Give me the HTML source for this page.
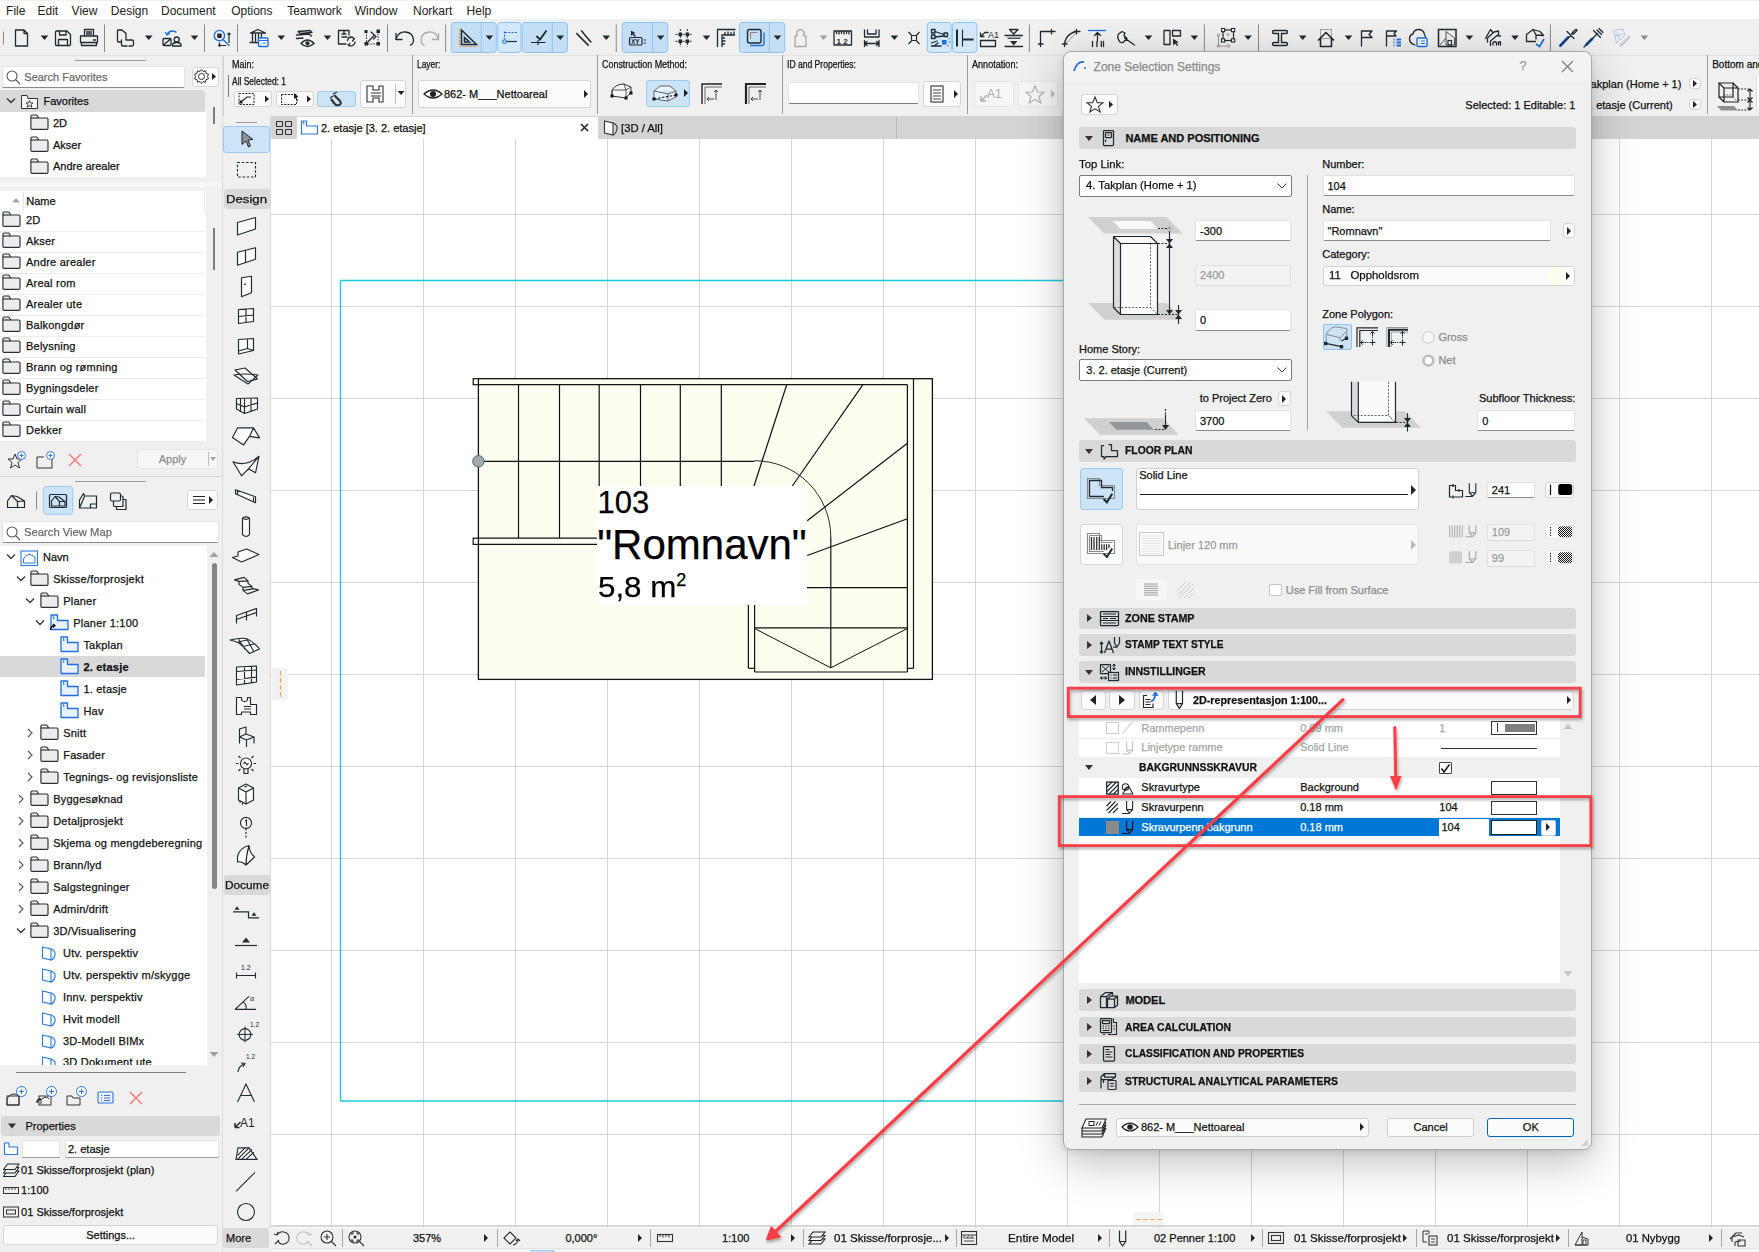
<!DOCTYPE html>
<html><head><meta charset="utf-8"><style>
html,body{margin:0;padding:0;width:1759px;height:1252px;overflow:hidden;background:#f0f0f0;}
body{position:relative;font-family:"Liberation Sans", sans-serif;}
body>div,body>svg{position:absolute;box-sizing:border-box;}
.t{white-space:pre;-webkit-text-stroke:0.25px currentColor;}
</style></head><body>
<div style="left:0px;top:1px;width:1759px;height:18px;background:#fff"></div>
<div class="t" style="left:6.1px;top:2.5px;font-size:12px;line-height:16px;color:#222;font-weight:normal;-webkit-text-stroke:0;">File</div>
<div class="t" style="left:37.5px;top:2.5px;font-size:12px;line-height:16px;color:#222;font-weight:normal;-webkit-text-stroke:0;">Edit</div>
<div class="t" style="left:71.6px;top:2.5px;font-size:12px;line-height:16px;color:#222;font-weight:normal;-webkit-text-stroke:0;">View</div>
<div class="t" style="left:110.8px;top:2.5px;font-size:12px;line-height:16px;color:#222;font-weight:normal;-webkit-text-stroke:0;">Design</div>
<div class="t" style="left:161px;top:2.5px;font-size:12px;line-height:16px;color:#222;font-weight:normal;-webkit-text-stroke:0;">Document</div>
<div class="t" style="left:231.2px;top:2.5px;font-size:12px;line-height:16px;color:#222;font-weight:normal;-webkit-text-stroke:0;">Options</div>
<div class="t" style="left:287.2px;top:2.5px;font-size:12px;line-height:16px;color:#222;font-weight:normal;-webkit-text-stroke:0;">Teamwork</div>
<div class="t" style="left:354.7px;top:2.5px;font-size:12px;line-height:16px;color:#222;font-weight:normal;-webkit-text-stroke:0;">Window</div>
<div class="t" style="left:413px;top:2.5px;font-size:12px;line-height:16px;color:#222;font-weight:normal;-webkit-text-stroke:0;">Norkart</div>
<div class="t" style="left:466.6px;top:2.5px;font-size:12px;line-height:16px;color:#222;font-weight:normal;-webkit-text-stroke:0;">Help</div>
<div style="left:0px;top:55px;width:1759px;height:1px;background:#e3e3e3"></div>
<div style="left:222px;top:56px;width:1537px;height:60px;background:#f0f0f0"></div>
<div style="left:0px;top:56px;width:222px;height:1196px;background:#f0f0f0"></div>
<div style="left:222px;top:56px;width:1px;height:1196px;background:#dcdcdc"></div>
<div style="left:223px;top:116px;width:48px;height:1136px;background:#f0f0f0"></div>
<div style="left:270px;top:116px;width:1px;height:1112px;background:#dadada"></div>
<div style="left:271px;top:116px;width:1488px;height:23px;background:#d4d4d4"></div>
<div style="left:271px;top:139px;width:1488px;height:1089px;background:#fff"></div>
<div style="left:271px;top:1228px;width:1488px;height:24px;background:#f0f0f0"></div>
<div style="left:271px;top:1225px;width:1488px;height:1px;background:#d8d8d8"></div>
<div style="left:271px;top:1248px;width:1488px;height:1px;background:#e2e2e2"></div>
<div style="left:271px;top:1249px;width:1488px;height:3px;background:#f5f5f5"></div>
<svg style="left:271px;top:139px;" width="1488" height="1089" viewBox="0 0 1488 1089"><line x1="60.5" y1="0" x2="60.5" y2="1089" stroke="#d6d6d6" stroke-width="1"/><line x1="152.5" y1="0" x2="152.5" y2="1089" stroke="#d6d6d6" stroke-width="1"/><line x1="244.5" y1="0" x2="244.5" y2="1089" stroke="#d6d6d6" stroke-width="1"/><line x1="336.5" y1="0" x2="336.5" y2="1089" stroke="#d6d6d6" stroke-width="1"/><line x1="428.5" y1="0" x2="428.5" y2="1089" stroke="#d6d6d6" stroke-width="1"/><line x1="520.5" y1="0" x2="520.5" y2="1089" stroke="#d6d6d6" stroke-width="1"/><line x1="612.5" y1="0" x2="612.5" y2="1089" stroke="#d6d6d6" stroke-width="1"/><line x1="704.5" y1="0" x2="704.5" y2="1089" stroke="#d6d6d6" stroke-width="1"/><line x1="796.5" y1="0" x2="796.5" y2="1089" stroke="#d6d6d6" stroke-width="1"/><line x1="888.5" y1="0" x2="888.5" y2="1089" stroke="#d6d6d6" stroke-width="1"/><line x1="980.5" y1="0" x2="980.5" y2="1089" stroke="#d6d6d6" stroke-width="1"/><line x1="1072.5" y1="0" x2="1072.5" y2="1089" stroke="#d6d6d6" stroke-width="1"/><line x1="1164.5" y1="0" x2="1164.5" y2="1089" stroke="#d6d6d6" stroke-width="1"/><line x1="1256.5" y1="0" x2="1256.5" y2="1089" stroke="#d6d6d6" stroke-width="1"/><line x1="1348.5" y1="0" x2="1348.5" y2="1089" stroke="#d6d6d6" stroke-width="1"/><line x1="1440.5" y1="0" x2="1440.5" y2="1089" stroke="#d6d6d6" stroke-width="1"/><line x1="0" y1="75.5" x2="1488" y2="75.5" stroke="#d6d6d6" stroke-width="1"/><line x1="0" y1="167.5" x2="1488" y2="167.5" stroke="#d6d6d6" stroke-width="1"/><line x1="0" y1="259.5" x2="1488" y2="259.5" stroke="#d6d6d6" stroke-width="1"/><line x1="0" y1="351.5" x2="1488" y2="351.5" stroke="#d6d6d6" stroke-width="1"/><line x1="0" y1="443.5" x2="1488" y2="443.5" stroke="#d6d6d6" stroke-width="1"/><line x1="0" y1="535.5" x2="1488" y2="535.5" stroke="#d6d6d6" stroke-width="1"/><line x1="0" y1="627.5" x2="1488" y2="627.5" stroke="#d6d6d6" stroke-width="1"/><line x1="0" y1="719.5" x2="1488" y2="719.5" stroke="#d6d6d6" stroke-width="1"/><line x1="0" y1="811.5" x2="1488" y2="811.5" stroke="#d6d6d6" stroke-width="1"/><line x1="0" y1="903.5" x2="1488" y2="903.5" stroke="#d6d6d6" stroke-width="1"/><line x1="0" y1="995.5" x2="1488" y2="995.5" stroke="#d6d6d6" stroke-width="1"/><line x1="0" y1="1087.5" x2="1488" y2="1087.5" stroke="#d6d6d6" stroke-width="1"/></svg>
<div style="left:75px;top:59.5px;width:71px;height:1.0px;background:#9a9a9a"></div>
<div style="left:2px;top:66px;width:183px;height:21.5px;background:#fff;border:1px solid #e4e4e4;border-bottom:1px solid #8a8a8a;border-radius:2px"></div>
<svg style="left:5px;top:69px;" width="16" height="16" viewBox="0 0 16 16"><circle cx="7" cy="7" r="5" fill="none" stroke="#555" stroke-width="1.1"/><path d="M10.5 10.5 L15 15" stroke="#555" stroke-width="1.1"/></svg>
<div class="t" style="left:24.3px;top:69.5px;font-size:11px;line-height:15px;color:#6d6d6d;font-weight:normal;">Search Favorites</div>
<div style="left:191.5px;top:66.5px;width:27.0px;height:20.0px;background:#fbfbfb;border:1px solid #d6d6d6;border-radius:3px"></div>
<svg style="left:192px;top:67px;" width="26" height="19" viewBox="0 0 26 19"><circle cx="9.5" cy="9.5" r="3" fill="none" stroke="#333" stroke-width="1"/><path d="M9.5 2.5 L11 4.5 L13.5 3.8 L14 6.3 L16.5 7.2 L15.5 9.5 L16.5 11.8 L14 12.7 L13.5 15.2 L11 14.5 L9.5 16.5 L8 14.5 L5.5 15.2 L5 12.7 L2.5 11.8 L3.5 9.5 L2.5 7.2 L5 6.3 L5.5 3.8 L8 4.5 Z" fill="none" stroke="#333" stroke-width="1"/><path d="M20 6 L24 9.5 L20 13 Z" fill="#222"/></svg>
<div style="left:0px;top:112px;width:206px;height:64.5px;background:#fff"></div>
<div style="left:0px;top:90px;width:204.6px;height:22px;background:#d9d9d9;border-radius:0 3px 3px 0"></div>
<svg style="left:5.5px;top:97px;" width="10" height="8" viewBox="0 0 10 8"><path d="M1 1.5 L5 5.5 L9 1.5" fill="none" stroke="#333" stroke-width="1.3"/></svg>
<svg style="left:19.5px;top:93px;" width="20" height="17" viewBox="0 0 20 17"><path d="M1.5 3.5 L1.5 15.5 L17.5 15.5 L17.5 5.5 L8 5.5 L7 2.5 L1.5 2.5 Z" fill="#f4f4f4" stroke="#333" stroke-width="1"/><path d="M9.5 7.5 L10.5 10 L13 10 L11 11.7 L11.8 14.2 L9.5 12.7 L7.2 14.2 L8 11.7 L6 10 L8.5 10 Z" fill="none" stroke="#333" stroke-width="0.9"/></svg>
<div class="t" style="left:43.5px;top:93.5px;font-size:11px;line-height:15px;color:#111;font-weight:normal;">Favorites</div>
<svg style="left:30px;top:114.4px;" width="20" height="17" viewBox="0 0 20 17"><path d="M0.9 2.2 Q0.9 1 2.1 1 L6.8 1 L8.8 4 L16.8 4 Q18 4 18 5.2 L18 14.2 Q18 15.4 16.8 15.4 L2.1 15.4 Q0.9 15.4 0.9 14.2 Z" fill="#ececec" stroke="#2a3035" stroke-width="1.15" stroke-linejoin="round"/><path d="M0.9 4 L8.8 4" stroke="#2a3035" stroke-width="1.15"/></svg>
<div class="t" style="left:53px;top:115.9px;font-size:11px;line-height:15px;color:#111;font-weight:normal;">2D</div>
<svg style="left:30px;top:136px;" width="20" height="17" viewBox="0 0 20 17"><path d="M0.9 2.2 Q0.9 1 2.1 1 L6.8 1 L8.8 4 L16.8 4 Q18 4 18 5.2 L18 14.2 Q18 15.4 16.8 15.4 L2.1 15.4 Q0.9 15.4 0.9 14.2 Z" fill="#ececec" stroke="#2a3035" stroke-width="1.15" stroke-linejoin="round"/><path d="M0.9 4 L8.8 4" stroke="#2a3035" stroke-width="1.15"/></svg>
<div class="t" style="left:53px;top:137.5px;font-size:11px;line-height:15px;color:#111;font-weight:normal;">Akser</div>
<svg style="left:30px;top:157.8px;" width="20" height="17" viewBox="0 0 20 17"><path d="M0.9 2.2 Q0.9 1 2.1 1 L6.8 1 L8.8 4 L16.8 4 Q18 4 18 5.2 L18 14.2 Q18 15.4 16.8 15.4 L2.1 15.4 Q0.9 15.4 0.9 14.2 Z" fill="#ececec" stroke="#2a3035" stroke-width="1.15" stroke-linejoin="round"/><path d="M0.9 4 L8.8 4" stroke="#2a3035" stroke-width="1.15"/></svg>
<div class="t" style="left:53px;top:159.3px;font-size:11px;line-height:15px;color:#111;font-weight:normal;">Andre arealer</div>
<div style="left:213px;top:107px;width:2px;height:17px;background:#7c7c7c"></div>
<div style="left:0px;top:182px;width:222px;height:5px;background:#f6f6f6"></div>
<div style="left:0px;top:191px;width:206px;height:251.39999999999998px;background:#fff"></div>
<div style="left:23px;top:192px;width:1px;height:18px;background:#e6e6e6"></div>
<div style="left:204px;top:192px;width:1px;height:18px;background:#e6e6e6"></div>
<svg style="left:11px;top:196px;" width="10" height="8" viewBox="0 0 10 8"><path d="M1 6.5 L5 2 L9 6.5 Z" fill="#a8a8a8"/></svg>
<div class="t" style="left:26.2px;top:193.9px;font-size:11px;line-height:15px;color:#111;font-weight:normal;">Name</div>
<svg style="left:1.5px;top:211px;" width="20" height="17" viewBox="0 0 20 17"><path d="M0.9 2.2 Q0.9 1 2.1 1 L6.8 1 L8.8 4 L16.8 4 Q18 4 18 5.2 L18 14.2 Q18 15.4 16.8 15.4 L2.1 15.4 Q0.9 15.4 0.9 14.2 Z" fill="#ececec" stroke="#2a3035" stroke-width="1.15" stroke-linejoin="round"/><path d="M0.9 4 L8.8 4" stroke="#2a3035" stroke-width="1.15"/></svg>
<div class="t" style="left:26px;top:212.5px;font-size:11px;line-height:15px;color:#111;font-weight:normal;letter-spacing:0.22px;">2D</div>
<div style="left:0px;top:230.5px;width:205px;height:1.0px;background:#ececec"></div>
<svg style="left:1.5px;top:232px;" width="20" height="17" viewBox="0 0 20 17"><path d="M0.9 2.2 Q0.9 1 2.1 1 L6.8 1 L8.8 4 L16.8 4 Q18 4 18 5.2 L18 14.2 Q18 15.4 16.8 15.4 L2.1 15.4 Q0.9 15.4 0.9 14.2 Z" fill="#ececec" stroke="#2a3035" stroke-width="1.15" stroke-linejoin="round"/><path d="M0.9 4 L8.8 4" stroke="#2a3035" stroke-width="1.15"/></svg>
<div class="t" style="left:26px;top:233.5px;font-size:11px;line-height:15px;color:#111;font-weight:normal;letter-spacing:0.22px;">Akser</div>
<div style="left:0px;top:251.5px;width:205px;height:1.0px;background:#ececec"></div>
<svg style="left:1.5px;top:253px;" width="20" height="17" viewBox="0 0 20 17"><path d="M0.9 2.2 Q0.9 1 2.1 1 L6.8 1 L8.8 4 L16.8 4 Q18 4 18 5.2 L18 14.2 Q18 15.4 16.8 15.4 L2.1 15.4 Q0.9 15.4 0.9 14.2 Z" fill="#ececec" stroke="#2a3035" stroke-width="1.15" stroke-linejoin="round"/><path d="M0.9 4 L8.8 4" stroke="#2a3035" stroke-width="1.15"/></svg>
<div class="t" style="left:26px;top:254.5px;font-size:11px;line-height:15px;color:#111;font-weight:normal;letter-spacing:0.22px;">Andre arealer</div>
<div style="left:0px;top:272.5px;width:205px;height:1.0px;background:#ececec"></div>
<svg style="left:1.5px;top:274px;" width="20" height="17" viewBox="0 0 20 17"><path d="M0.9 2.2 Q0.9 1 2.1 1 L6.8 1 L8.8 4 L16.8 4 Q18 4 18 5.2 L18 14.2 Q18 15.4 16.8 15.4 L2.1 15.4 Q0.9 15.4 0.9 14.2 Z" fill="#ececec" stroke="#2a3035" stroke-width="1.15" stroke-linejoin="round"/><path d="M0.9 4 L8.8 4" stroke="#2a3035" stroke-width="1.15"/></svg>
<div class="t" style="left:26px;top:275.5px;font-size:11px;line-height:15px;color:#111;font-weight:normal;letter-spacing:0.22px;">Areal rom</div>
<div style="left:0px;top:293.5px;width:205px;height:1.0px;background:#ececec"></div>
<svg style="left:1.5px;top:295px;" width="20" height="17" viewBox="0 0 20 17"><path d="M0.9 2.2 Q0.9 1 2.1 1 L6.8 1 L8.8 4 L16.8 4 Q18 4 18 5.2 L18 14.2 Q18 15.4 16.8 15.4 L2.1 15.4 Q0.9 15.4 0.9 14.2 Z" fill="#ececec" stroke="#2a3035" stroke-width="1.15" stroke-linejoin="round"/><path d="M0.9 4 L8.8 4" stroke="#2a3035" stroke-width="1.15"/></svg>
<div class="t" style="left:26px;top:296.5px;font-size:11px;line-height:15px;color:#111;font-weight:normal;letter-spacing:0.22px;">Arealer ute</div>
<div style="left:0px;top:314.5px;width:205px;height:1.0px;background:#ececec"></div>
<svg style="left:1.5px;top:316px;" width="20" height="17" viewBox="0 0 20 17"><path d="M0.9 2.2 Q0.9 1 2.1 1 L6.8 1 L8.8 4 L16.8 4 Q18 4 18 5.2 L18 14.2 Q18 15.4 16.8 15.4 L2.1 15.4 Q0.9 15.4 0.9 14.2 Z" fill="#ececec" stroke="#2a3035" stroke-width="1.15" stroke-linejoin="round"/><path d="M0.9 4 L8.8 4" stroke="#2a3035" stroke-width="1.15"/></svg>
<div class="t" style="left:26px;top:317.5px;font-size:11px;line-height:15px;color:#111;font-weight:normal;letter-spacing:0.22px;">Balkongdør</div>
<div style="left:0px;top:335.5px;width:205px;height:1.0px;background:#ececec"></div>
<svg style="left:1.5px;top:337px;" width="20" height="17" viewBox="0 0 20 17"><path d="M0.9 2.2 Q0.9 1 2.1 1 L6.8 1 L8.8 4 L16.8 4 Q18 4 18 5.2 L18 14.2 Q18 15.4 16.8 15.4 L2.1 15.4 Q0.9 15.4 0.9 14.2 Z" fill="#ececec" stroke="#2a3035" stroke-width="1.15" stroke-linejoin="round"/><path d="M0.9 4 L8.8 4" stroke="#2a3035" stroke-width="1.15"/></svg>
<div class="t" style="left:26px;top:338.5px;font-size:11px;line-height:15px;color:#111;font-weight:normal;letter-spacing:0.22px;">Belysning</div>
<div style="left:0px;top:356.5px;width:205px;height:1.0px;background:#ececec"></div>
<svg style="left:1.5px;top:358px;" width="20" height="17" viewBox="0 0 20 17"><path d="M0.9 2.2 Q0.9 1 2.1 1 L6.8 1 L8.8 4 L16.8 4 Q18 4 18 5.2 L18 14.2 Q18 15.4 16.8 15.4 L2.1 15.4 Q0.9 15.4 0.9 14.2 Z" fill="#ececec" stroke="#2a3035" stroke-width="1.15" stroke-linejoin="round"/><path d="M0.9 4 L8.8 4" stroke="#2a3035" stroke-width="1.15"/></svg>
<div class="t" style="left:26px;top:359.5px;font-size:11px;line-height:15px;color:#111;font-weight:normal;letter-spacing:0.22px;">Brann og rømning</div>
<div style="left:0px;top:377.5px;width:205px;height:1.0px;background:#ececec"></div>
<svg style="left:1.5px;top:379px;" width="20" height="17" viewBox="0 0 20 17"><path d="M0.9 2.2 Q0.9 1 2.1 1 L6.8 1 L8.8 4 L16.8 4 Q18 4 18 5.2 L18 14.2 Q18 15.4 16.8 15.4 L2.1 15.4 Q0.9 15.4 0.9 14.2 Z" fill="#ececec" stroke="#2a3035" stroke-width="1.15" stroke-linejoin="round"/><path d="M0.9 4 L8.8 4" stroke="#2a3035" stroke-width="1.15"/></svg>
<div class="t" style="left:26px;top:380.5px;font-size:11px;line-height:15px;color:#111;font-weight:normal;letter-spacing:0.22px;">Bygningsdeler</div>
<div style="left:0px;top:398.5px;width:205px;height:1.0px;background:#ececec"></div>
<svg style="left:1.5px;top:400px;" width="20" height="17" viewBox="0 0 20 17"><path d="M0.9 2.2 Q0.9 1 2.1 1 L6.8 1 L8.8 4 L16.8 4 Q18 4 18 5.2 L18 14.2 Q18 15.4 16.8 15.4 L2.1 15.4 Q0.9 15.4 0.9 14.2 Z" fill="#ececec" stroke="#2a3035" stroke-width="1.15" stroke-linejoin="round"/><path d="M0.9 4 L8.8 4" stroke="#2a3035" stroke-width="1.15"/></svg>
<div class="t" style="left:26px;top:401.5px;font-size:11px;line-height:15px;color:#111;font-weight:normal;letter-spacing:0.22px;">Curtain wall</div>
<div style="left:0px;top:419.5px;width:205px;height:1.0px;background:#ececec"></div>
<svg style="left:1.5px;top:421px;" width="20" height="17" viewBox="0 0 20 17"><path d="M0.9 2.2 Q0.9 1 2.1 1 L6.8 1 L8.8 4 L16.8 4 Q18 4 18 5.2 L18 14.2 Q18 15.4 16.8 15.4 L2.1 15.4 Q0.9 15.4 0.9 14.2 Z" fill="#ececec" stroke="#2a3035" stroke-width="1.15" stroke-linejoin="round"/><path d="M0.9 4 L8.8 4" stroke="#2a3035" stroke-width="1.15"/></svg>
<div class="t" style="left:26px;top:422.5px;font-size:11px;line-height:15px;color:#111;font-weight:normal;letter-spacing:0.22px;">Dekker</div>
<div style="left:0px;top:440.5px;width:205px;height:1.0px;background:#ececec"></div>
<div style="left:213px;top:228px;width:2px;height:42px;background:#7c7c7c"></div>
<svg style="left:6px;top:450px;" width="22" height="20" viewBox="0 0 22 20"><path d="M9 4 L11 9 L16 9 L12 12.5 L13.5 18 L9 15 L4.5 18 L6 12.5 L2 9 L7 9 Z" fill="none" stroke="#333" stroke-width="1"/><circle cx="15.5" cy="5.5" r="4" fill="#fff" stroke="#2b79e3" stroke-width="1"/><path d="M15.5 3.5 L15.5 7.5 M13.5 5.5 L17.5 5.5" stroke="#2b79e3" stroke-width="1"/></svg>
<svg style="left:35px;top:450px;" width="22" height="20" viewBox="0 0 22 20"><path d="M2 7 L2 18 L17 18 L17 9 M2 7 L9 7" fill="none" stroke="#333" stroke-width="1"/><circle cx="15.5" cy="5.5" r="4" fill="#fff" stroke="#2b79e3" stroke-width="1"/><path d="M15.5 3.5 L15.5 7.5 M13.5 5.5 L17.5 5.5" stroke="#2b79e3" stroke-width="1"/></svg>
<svg style="left:66px;top:451px;" width="18" height="18" viewBox="0 0 18 18"><path d="M3 3 L15 15 M15 3 L3 15" stroke="#f08080" stroke-width="1.6"/></svg>
<div style="left:136.5px;top:449.4px;width:81.9px;height:19.400000000000034px;background:#f6f6f6;border:1px solid #e4e4e4;border-radius:3px"></div>
<div class="t" style="left:-27.5px;width:400px;text-align:center;top:452.0px;font-size:11px;line-height:15px;color:#8d8d8d;font-weight:normal;">Apply</div>
<div style="left:207.5px;top:452px;width:1.0px;height:14px;background:#bdbdbd"></div>
<svg style="left:209px;top:456px;" width="8" height="6" viewBox="0 0 8 6"><path d="M1 1 L7 1 L4 5 Z" fill="#a0a0a0"/></svg>
<div style="left:0px;top:475.5px;width:222px;height:1.0px;background:#d6d6d6"></div>
<div style="left:75px;top:480.5px;width:71px;height:1.0px;background:#9a9a9a"></div>
<svg style="left:0px;top:480px" width="140" height="40" viewBox="0 480 140 40"><path d="M7.5 507.5 L7.5 501 L11.5 495.5 L17 496.5 L24.5 501 L24.5 507.5 Z M11.5 495.5 L17.5 501.5 L24.5 501 M17.5 501.5 L17.5 507.5" fill="none" stroke="#1f2a30" stroke-width="1.2" stroke-linejoin="round"/><path d="M36.5 491.5 L36.5 509.5" stroke="#8a8a8a" stroke-width="1"/><rect x="43.4" y="486.4" width="29.4" height="27.9" rx="3" fill="#cce4f7" stroke="#9ccaf0" stroke-width="1"/><rect x="49.5" y="494.5" width="17" height="13" rx="1" fill="none" stroke="#1f2a30" stroke-width="1.2" stroke-linejoin="round" stroke-width="1.5"/><path d="M51.5 506 L51.5 501 L55 496.5 L59 497 L65 501.5 L65 506 Z M55 496.5 L59.5 501.5 L65 501.5 M59.5 501.5 L59.5 506" fill="none" stroke="#1f2a30" stroke-width="1.2" stroke-linejoin="round"/><path d="M79.5 508 L79.5 500 L83.5 493.5 L84.5 496 L96.5 496 L96.5 508 Z M79.5 508 L84.5 496.5 M90.5 508 L90.5 504 L96.5 504" fill="none" stroke="#1f2a30" stroke-width="1.2" stroke-linejoin="round"/><rect x="110.5" y="493" width="10" height="8" rx="1.5" fill="none" stroke="#1f2a30" stroke-width="1.2" stroke-linejoin="round"/><path d="M113.5 501 L113.5 505.5 Q113.5 506.5 114.5 506.5 L123 506.5 L123 497 Q123 496 122 496 L120.5 496 M116.5 506.5 L116.5 509.5 L126 509.5 L126 499.5 L123 499.5" fill="none" stroke="#1f2a30" stroke-width="1.2" stroke-linejoin="round"/></svg>
<div style="left:186.6px;top:490px;width:31.80000000000001px;height:20px;background:#fbfbfb;border:1px solid #d6d6d6;border-radius:3px"></div>
<svg style="left:190px;top:494px;" width="26" height="12" viewBox="0 0 26 12"><path d="M3 2.5 L15 2.5 M3 6 L15 6 M3 9.5 L15 9.5" stroke="#222" stroke-width="1.1"/><path d="M19 2 L23 6 L19 10 Z" fill="#222"/></svg>
<div style="left:2.4px;top:521.3px;width:216.6px;height:21.90000000000009px;background:#fff;border:1px solid #e4e4e4;border-bottom:1px solid #8a8a8a;border-radius:2px"></div>
<svg style="left:5px;top:525px;" width="16" height="16" viewBox="0 0 16 16"><circle cx="7" cy="7" r="5" fill="none" stroke="#555" stroke-width="1.1"/><path d="M10.5 10.5 L15 15" stroke="#555" stroke-width="1.1"/></svg>
<div class="t" style="left:23.5px;top:525.0px;font-size:11px;line-height:15px;color:#6d6d6d;font-weight:normal;transform:scaleX(1.023);transform-origin:left;">Search View Map</div>
<div style="left:0px;top:546px;width:207px;height:519px;background:#fff"></div>
<svg style="left:6px;top:553.2px;" width="10" height="8" viewBox="0 0 10 8"><path d="M1 1.5 L5 5.5 L9 1.5" fill="none" stroke="#333" stroke-width="1.3"/></svg>
<svg style="left:19.5px;top:550px;" width="19" height="17" viewBox="0 0 19 17"><rect x="1" y="1" width="16.5" height="14.5" fill="#fff" stroke="#2b79e3" stroke-width="1.1"/><path d="M3.5 13 L3.5 9 Q5.5 4.5 10 4.5 L15 7 L15 13 Z" fill="none" stroke="#2b79e3" stroke-width="1"/></svg>
<div class="t" style="left:43px;top:549.7px;font-size:11px;line-height:15px;color:#111;font-weight:normal;">Navn</div>
<div style="left:0px;top:656.4px;width:204.7px;height:21.0px;background:#d9d9d9"></div>
<svg style="left:15.7px;top:575.4px;" width="10" height="8" viewBox="0 0 10 8"><path d="M1 1.5 L5 5.5 L9 1.5" fill="none" stroke="#333" stroke-width="1.3"/></svg>
<svg style="left:30px;top:570.4px;" width="20" height="17" viewBox="0 0 20 17"><path d="M0.9 2.2 Q0.9 1 2.1 1 L6.8 1 L8.8 4 L16.8 4 Q18 4 18 5.2 L18 14.2 Q18 15.4 16.8 15.4 L2.1 15.4 Q0.9 15.4 0.9 14.2 Z" fill="#ececec" stroke="#2a3035" stroke-width="1.15" stroke-linejoin="round"/><path d="M0.9 4 L8.8 4" stroke="#2a3035" stroke-width="1.15"/></svg>
<div class="t" style="left:53.2px;top:571.9px;font-size:11px;line-height:15px;color:#111;font-weight:normal;letter-spacing:0.22px;">Skisse/forprosjekt</div>
<svg style="left:25.2px;top:597.2px;" width="10" height="8" viewBox="0 0 10 8"><path d="M1 1.5 L5 5.5 L9 1.5" fill="none" stroke="#333" stroke-width="1.3"/></svg>
<svg style="left:40px;top:592.2px;" width="20" height="17" viewBox="0 0 20 17"><path d="M0.9 2.2 Q0.9 1 2.1 1 L6.8 1 L8.8 4 L16.8 4 Q18 4 18 5.2 L18 14.2 Q18 15.4 16.8 15.4 L2.1 15.4 Q0.9 15.4 0.9 14.2 Z" fill="#ececec" stroke="#2a3035" stroke-width="1.15" stroke-linejoin="round"/><path d="M0.9 4 L8.8 4" stroke="#2a3035" stroke-width="1.15"/></svg>
<div class="t" style="left:63.2px;top:593.7px;font-size:11px;line-height:15px;color:#111;font-weight:normal;letter-spacing:0.22px;">Planer</div>
<svg style="left:35.2px;top:619px;" width="10" height="8" viewBox="0 0 10 8"><path d="M1 1.5 L5 5.5 L9 1.5" fill="none" stroke="#333" stroke-width="1.3"/></svg>
<svg style="left:50.3px;top:614px;" width="20" height="17" viewBox="0 0 20 17"><path d="M1 1 L7.5 1 L7.5 6.5 L18 6.5 L18 15.5 L1 15.5 Z" fill="#e8f1fc" stroke="#1f6fe0" stroke-width="1.3" stroke-linejoin="round"/><path d="M3.5 2 L3.5 5 L5 3.5" fill="none" stroke="#2b79e3" stroke-width="0.8"/></svg>
<svg style="left:49.3px;top:623px;" width="8" height="8" viewBox="0 0 8 8"><path d="M1.5 7 Q1.5 2.5 6 2.5 M4 1 L6 2.5 L4 4.5" fill="none" stroke="#111" stroke-width="1.3"/></svg>
<div class="t" style="left:73.3px;top:615.5px;font-size:11px;line-height:15px;color:#111;font-weight:normal;letter-spacing:0.22px;">Planer 1:100</div>
<svg style="left:60.4px;top:636px;" width="20" height="17" viewBox="0 0 20 17"><path d="M1 1 L7.5 1 L7.5 6.5 L18 6.5 L18 15.5 L1 15.5 Z" fill="#e8f1fc" stroke="#1f6fe0" stroke-width="1.3" stroke-linejoin="round"/><path d="M3.5 2 L3.5 5 L5 3.5" fill="none" stroke="#2b79e3" stroke-width="0.8"/></svg>
<div class="t" style="left:83.4px;top:637.5px;font-size:11px;line-height:15px;color:#111;font-weight:normal;letter-spacing:0.22px;">Takplan</div>
<svg style="left:60.4px;top:658px;" width="20" height="17" viewBox="0 0 20 17"><path d="M1 1 L7.5 1 L7.5 6.5 L18 6.5 L18 15.5 L1 15.5 Z" fill="#e8f1fc" stroke="#1f6fe0" stroke-width="1.3" stroke-linejoin="round"/><path d="M3.5 2 L3.5 5 L5 3.5" fill="none" stroke="#2b79e3" stroke-width="0.8"/></svg>
<div class="t" style="left:83.4px;top:659.5px;font-size:11px;line-height:15px;color:#111;font-weight:bold;letter-spacing:0.22px;">2. etasje</div>
<svg style="left:60.4px;top:680px;" width="20" height="17" viewBox="0 0 20 17"><path d="M1 1 L7.5 1 L7.5 6.5 L18 6.5 L18 15.5 L1 15.5 Z" fill="#e8f1fc" stroke="#1f6fe0" stroke-width="1.3" stroke-linejoin="round"/><path d="M3.5 2 L3.5 5 L5 3.5" fill="none" stroke="#2b79e3" stroke-width="0.8"/></svg>
<div class="t" style="left:83.4px;top:681.5px;font-size:11px;line-height:15px;color:#111;font-weight:normal;letter-spacing:0.22px;">1. etasje</div>
<svg style="left:60.4px;top:702px;" width="20" height="17" viewBox="0 0 20 17"><path d="M1 1 L7.5 1 L7.5 6.5 L18 6.5 L18 15.5 L1 15.5 Z" fill="#e8f1fc" stroke="#1f6fe0" stroke-width="1.3" stroke-linejoin="round"/><path d="M3.5 2 L3.5 5 L5 3.5" fill="none" stroke="#2b79e3" stroke-width="0.8"/></svg>
<div class="t" style="left:83.4px;top:703.5px;font-size:11px;line-height:15px;color:#111;font-weight:normal;letter-spacing:0.22px;">Hav</div>
<svg style="left:26.2px;top:728px;" width="8" height="10" viewBox="0 0 8 10"><path d="M2 1 L6 5 L2 9" fill="none" stroke="#555" stroke-width="1.1"/></svg>
<svg style="left:40px;top:724px;" width="20" height="17" viewBox="0 0 20 17"><path d="M0.9 2.2 Q0.9 1 2.1 1 L6.8 1 L8.8 4 L16.8 4 Q18 4 18 5.2 L18 14.2 Q18 15.4 16.8 15.4 L2.1 15.4 Q0.9 15.4 0.9 14.2 Z" fill="#ececec" stroke="#2a3035" stroke-width="1.15" stroke-linejoin="round"/><path d="M0.9 4 L8.8 4" stroke="#2a3035" stroke-width="1.15"/></svg>
<div class="t" style="left:63.2px;top:725.5px;font-size:11px;line-height:15px;color:#111;font-weight:normal;letter-spacing:0.22px;">Snitt</div>
<svg style="left:26.2px;top:750px;" width="8" height="10" viewBox="0 0 8 10"><path d="M2 1 L6 5 L2 9" fill="none" stroke="#555" stroke-width="1.1"/></svg>
<svg style="left:40px;top:746px;" width="20" height="17" viewBox="0 0 20 17"><path d="M0.9 2.2 Q0.9 1 2.1 1 L6.8 1 L8.8 4 L16.8 4 Q18 4 18 5.2 L18 14.2 Q18 15.4 16.8 15.4 L2.1 15.4 Q0.9 15.4 0.9 14.2 Z" fill="#ececec" stroke="#2a3035" stroke-width="1.15" stroke-linejoin="round"/><path d="M0.9 4 L8.8 4" stroke="#2a3035" stroke-width="1.15"/></svg>
<div class="t" style="left:63.2px;top:747.5px;font-size:11px;line-height:15px;color:#111;font-weight:normal;letter-spacing:0.22px;">Fasader</div>
<svg style="left:26.2px;top:772px;" width="8" height="10" viewBox="0 0 8 10"><path d="M2 1 L6 5 L2 9" fill="none" stroke="#555" stroke-width="1.1"/></svg>
<svg style="left:40px;top:768px;" width="20" height="17" viewBox="0 0 20 17"><path d="M0.9 2.2 Q0.9 1 2.1 1 L6.8 1 L8.8 4 L16.8 4 Q18 4 18 5.2 L18 14.2 Q18 15.4 16.8 15.4 L2.1 15.4 Q0.9 15.4 0.9 14.2 Z" fill="#ececec" stroke="#2a3035" stroke-width="1.15" stroke-linejoin="round"/><path d="M0.9 4 L8.8 4" stroke="#2a3035" stroke-width="1.15"/></svg>
<div class="t" style="left:63.2px;top:769.5px;font-size:11px;line-height:15px;color:#111;font-weight:normal;letter-spacing:0.22px;">Tegnings- og revisjonsliste</div>
<svg style="left:16.7px;top:794px;" width="8" height="10" viewBox="0 0 8 10"><path d="M2 1 L6 5 L2 9" fill="none" stroke="#555" stroke-width="1.1"/></svg>
<svg style="left:30px;top:790px;" width="20" height="17" viewBox="0 0 20 17"><path d="M0.9 2.2 Q0.9 1 2.1 1 L6.8 1 L8.8 4 L16.8 4 Q18 4 18 5.2 L18 14.2 Q18 15.4 16.8 15.4 L2.1 15.4 Q0.9 15.4 0.9 14.2 Z" fill="#ececec" stroke="#2a3035" stroke-width="1.15" stroke-linejoin="round"/><path d="M0.9 4 L8.8 4" stroke="#2a3035" stroke-width="1.15"/></svg>
<div class="t" style="left:53.2px;top:791.5px;font-size:11px;line-height:15px;color:#111;font-weight:normal;letter-spacing:0.22px;">Byggesøknad</div>
<svg style="left:16.7px;top:816px;" width="8" height="10" viewBox="0 0 8 10"><path d="M2 1 L6 5 L2 9" fill="none" stroke="#555" stroke-width="1.1"/></svg>
<svg style="left:30px;top:812px;" width="20" height="17" viewBox="0 0 20 17"><path d="M0.9 2.2 Q0.9 1 2.1 1 L6.8 1 L8.8 4 L16.8 4 Q18 4 18 5.2 L18 14.2 Q18 15.4 16.8 15.4 L2.1 15.4 Q0.9 15.4 0.9 14.2 Z" fill="#ececec" stroke="#2a3035" stroke-width="1.15" stroke-linejoin="round"/><path d="M0.9 4 L8.8 4" stroke="#2a3035" stroke-width="1.15"/></svg>
<div class="t" style="left:53.2px;top:813.5px;font-size:11px;line-height:15px;color:#111;font-weight:normal;letter-spacing:0.22px;">Detaljprosjekt</div>
<svg style="left:16.7px;top:838px;" width="8" height="10" viewBox="0 0 8 10"><path d="M2 1 L6 5 L2 9" fill="none" stroke="#555" stroke-width="1.1"/></svg>
<svg style="left:30px;top:834px;" width="20" height="17" viewBox="0 0 20 17"><path d="M0.9 2.2 Q0.9 1 2.1 1 L6.8 1 L8.8 4 L16.8 4 Q18 4 18 5.2 L18 14.2 Q18 15.4 16.8 15.4 L2.1 15.4 Q0.9 15.4 0.9 14.2 Z" fill="#ececec" stroke="#2a3035" stroke-width="1.15" stroke-linejoin="round"/><path d="M0.9 4 L8.8 4" stroke="#2a3035" stroke-width="1.15"/></svg>
<div class="t" style="left:53.2px;top:835.5px;font-size:11px;line-height:15px;color:#111;font-weight:normal;letter-spacing:0.22px;">Skjema og mengdeberegning</div>
<svg style="left:16.7px;top:860px;" width="8" height="10" viewBox="0 0 8 10"><path d="M2 1 L6 5 L2 9" fill="none" stroke="#555" stroke-width="1.1"/></svg>
<svg style="left:30px;top:856px;" width="20" height="17" viewBox="0 0 20 17"><path d="M0.9 2.2 Q0.9 1 2.1 1 L6.8 1 L8.8 4 L16.8 4 Q18 4 18 5.2 L18 14.2 Q18 15.4 16.8 15.4 L2.1 15.4 Q0.9 15.4 0.9 14.2 Z" fill="#ececec" stroke="#2a3035" stroke-width="1.15" stroke-linejoin="round"/><path d="M0.9 4 L8.8 4" stroke="#2a3035" stroke-width="1.15"/></svg>
<div class="t" style="left:53.2px;top:857.5px;font-size:11px;line-height:15px;color:#111;font-weight:normal;letter-spacing:0.22px;">Brann/lyd</div>
<svg style="left:16.7px;top:882px;" width="8" height="10" viewBox="0 0 8 10"><path d="M2 1 L6 5 L2 9" fill="none" stroke="#555" stroke-width="1.1"/></svg>
<svg style="left:30px;top:878px;" width="20" height="17" viewBox="0 0 20 17"><path d="M0.9 2.2 Q0.9 1 2.1 1 L6.8 1 L8.8 4 L16.8 4 Q18 4 18 5.2 L18 14.2 Q18 15.4 16.8 15.4 L2.1 15.4 Q0.9 15.4 0.9 14.2 Z" fill="#ececec" stroke="#2a3035" stroke-width="1.15" stroke-linejoin="round"/><path d="M0.9 4 L8.8 4" stroke="#2a3035" stroke-width="1.15"/></svg>
<div class="t" style="left:53.2px;top:879.5px;font-size:11px;line-height:15px;color:#111;font-weight:normal;letter-spacing:0.22px;">Salgstegninger</div>
<svg style="left:16.7px;top:904.4px;" width="8" height="10" viewBox="0 0 8 10"><path d="M2 1 L6 5 L2 9" fill="none" stroke="#555" stroke-width="1.1"/></svg>
<svg style="left:30px;top:900.4px;" width="20" height="17" viewBox="0 0 20 17"><path d="M0.9 2.2 Q0.9 1 2.1 1 L6.8 1 L8.8 4 L16.8 4 Q18 4 18 5.2 L18 14.2 Q18 15.4 16.8 15.4 L2.1 15.4 Q0.9 15.4 0.9 14.2 Z" fill="#ececec" stroke="#2a3035" stroke-width="1.15" stroke-linejoin="round"/><path d="M0.9 4 L8.8 4" stroke="#2a3035" stroke-width="1.15"/></svg>
<div class="t" style="left:53.2px;top:901.9px;font-size:11px;line-height:15px;color:#111;font-weight:normal;letter-spacing:0.22px;">Admin/drift</div>
<svg style="left:15.7px;top:927px;" width="10" height="8" viewBox="0 0 10 8"><path d="M1 1.5 L5 5.5 L9 1.5" fill="none" stroke="#333" stroke-width="1.3"/></svg>
<svg style="left:30px;top:922px;" width="20" height="17" viewBox="0 0 20 17"><path d="M0.9 2.2 Q0.9 1 2.1 1 L6.8 1 L8.8 4 L16.8 4 Q18 4 18 5.2 L18 14.2 Q18 15.4 16.8 15.4 L2.1 15.4 Q0.9 15.4 0.9 14.2 Z" fill="#ececec" stroke="#2a3035" stroke-width="1.15" stroke-linejoin="round"/><path d="M0.9 4 L8.8 4" stroke="#2a3035" stroke-width="1.15"/></svg>
<div class="t" style="left:53.2px;top:923.5px;font-size:11px;line-height:15px;color:#111;font-weight:normal;letter-spacing:0.22px;">3D/Visualisering</div>
<svg style="left:40.5px;top:945px;" width="16" height="17" viewBox="0 0 16 17"><path d="M1.5 2 L10 4 L10 15 L1.5 13 Z" fill="#fff" stroke="#2b79e3" stroke-width="1.1"/><path d="M10 4 Q15 6 14 10 Q13 14 10 15" fill="none" stroke="#2b79e3" stroke-width="1.1"/></svg>
<div class="t" style="left:63px;top:945.5px;font-size:11px;line-height:15px;color:#111;font-weight:normal;letter-spacing:0.22px;">Utv. perspektiv</div>
<svg style="left:40.5px;top:967px;" width="16" height="17" viewBox="0 0 16 17"><path d="M1.5 2 L10 4 L10 15 L1.5 13 Z" fill="#fff" stroke="#2b79e3" stroke-width="1.1"/><path d="M10 4 Q15 6 14 10 Q13 14 10 15" fill="none" stroke="#2b79e3" stroke-width="1.1"/></svg>
<div class="t" style="left:63px;top:967.5px;font-size:11px;line-height:15px;color:#111;font-weight:normal;letter-spacing:0.22px;">Utv. perspektiv m/skygge</div>
<svg style="left:40.5px;top:989px;" width="16" height="17" viewBox="0 0 16 17"><path d="M1.5 2 L10 4 L10 15 L1.5 13 Z" fill="#fff" stroke="#2b79e3" stroke-width="1.1"/><path d="M10 4 Q15 6 14 10 Q13 14 10 15" fill="none" stroke="#2b79e3" stroke-width="1.1"/></svg>
<div class="t" style="left:63px;top:989.5px;font-size:11px;line-height:15px;color:#111;font-weight:normal;letter-spacing:0.22px;">Innv. perspektiv</div>
<svg style="left:40.5px;top:1011px;" width="16" height="17" viewBox="0 0 16 17"><path d="M1.5 2 L10 4 L10 15 L1.5 13 Z" fill="#fff" stroke="#2b79e3" stroke-width="1.1"/><path d="M10 4 Q15 6 14 10 Q13 14 10 15" fill="none" stroke="#2b79e3" stroke-width="1.1"/></svg>
<div class="t" style="left:63px;top:1011.5px;font-size:11px;line-height:15px;color:#111;font-weight:normal;letter-spacing:0.22px;">Hvit modell</div>
<svg style="left:40.5px;top:1033px;" width="16" height="17" viewBox="0 0 16 17"><path d="M1.5 2 L10 4 L10 15 L1.5 13 Z" fill="#fff" stroke="#2b79e3" stroke-width="1.1"/><path d="M10 4 Q15 6 14 10 Q13 14 10 15" fill="none" stroke="#2b79e3" stroke-width="1.1"/></svg>
<div class="t" style="left:63px;top:1033.5px;font-size:11px;line-height:15px;color:#111;font-weight:normal;letter-spacing:0.22px;">3D-Modell BIMx</div>
<svg style="left:40.5px;top:1054.5px;" width="16" height="17" viewBox="0 0 16 17"><path d="M1.5 2 L10 4 L10 15 L1.5 13 Z" fill="#fff" stroke="#2b79e3" stroke-width="1.1"/><path d="M10 4 Q15 6 14 10 Q13 14 10 15" fill="none" stroke="#2b79e3" stroke-width="1.1"/></svg>
<div class="t" style="left:63px;top:1055.0px;font-size:11px;line-height:15px;color:#111;font-weight:normal;letter-spacing:0.22px;">3D Dokument ute</div>
<div style="left:0px;top:1065px;width:207px;height:7px;background:#f0f0f0"></div>
<svg style="left:208px;top:549px;" width="12" height="10" viewBox="0 0 12 10"><path d="M1.5 8 L6 3 L10.5 8 Z" fill="#a0a0a0"/></svg>
<div style="left:211.5px;top:563px;width:5.5px;height:326px;background:#858585;border-radius:3px"></div>
<svg style="left:208px;top:1050px;" width="12" height="10" viewBox="0 0 12 10"><path d="M1.5 2 L6 7 L10.5 2 Z" fill="#a0a0a0"/></svg>
<div style="left:16px;top:1072.3px;width:169.7px;height:1.0px;background:#7d7d7d"></div>
<svg style="left:5px;top:1085px;" width="22" height="22" viewBox="0 0 22 22"><path d="M2 20 L2 14 Q4 9 10 9 L14 11 L14 20 Z" fill="none" stroke="#333" stroke-width="1"/><rect x="2" y="11" width="12" height="9" fill="none" stroke="#333" stroke-width="1"/><circle cx="16.5" cy="6.5" r="5" fill="#fff" stroke="#2b79e3" stroke-width="1"/><path d="M16.5 4 L16.5 9 M14 6.5 L19 6.5" stroke="#2b79e3" stroke-width="1"/></svg>
<svg style="left:35px;top:1085px;" width="22" height="22" viewBox="0 0 22 22"><rect x="4" y="11" width="12" height="9" fill="none" stroke="#333" stroke-width="1"/><path d="M6 19 L6 15 Q8 12 12 12 L14 14" fill="none" stroke="#333" stroke-width="1"/><path d="M2 18 Q2 14 6 14" fill="none" stroke="#111" stroke-width="1.3"/><circle cx="16.5" cy="6.5" r="5" fill="#fff" stroke="#2b79e3" stroke-width="1"/><path d="M16.5 4 L16.5 9 M14 6.5 L19 6.5" stroke="#2b79e3" stroke-width="1"/></svg>
<svg style="left:65px;top:1085px;" width="22" height="22" viewBox="0 0 22 22"><path d="M2 11 L2 20 L15 20 L15 13 L8 13 L7 11 Z" fill="none" stroke="#333" stroke-width="1"/><circle cx="16.5" cy="6.5" r="5" fill="#fff" stroke="#2b79e3" stroke-width="1"/><path d="M16.5 4 L16.5 9 M14 6.5 L19 6.5" stroke="#2b79e3" stroke-width="1"/></svg>
<svg style="left:96px;top:1089px;" width="20" height="16" viewBox="0 0 20 16"><rect x="2" y="3" width="15" height="11" rx="1" fill="none" stroke="#2b79e3" stroke-width="1.1"/><path d="M5 6.5 L6 6.5 M8 6.5 L14 6.5 M5 9 L6 9 M8 9 L14 9 M5 11.5 L6 11.5 M8 11.5 L14 11.5" stroke="#2b79e3" stroke-width="1"/></svg>
<svg style="left:127px;top:1089px;" width="18" height="18" viewBox="0 0 18 18"><path d="M3 3 L15 15 M15 3 L3 15" stroke="#f08080" stroke-width="1.6"/></svg>
<div style="left:1.4px;top:1115.6px;width:218.4px;height:20.90000000000009px;background:#d9d9d9;border-radius:3px"></div>
<svg style="left:7px;top:1122px;" width="10" height="8" viewBox="0 0 10 8"><path d="M1 1.5 L9 1.5 L5 6.5 Z" fill="#333"/></svg>
<div class="t" style="left:25.5px;top:1118.5px;font-size:11px;line-height:15px;color:#111;font-weight:normal;">Properties</div>
<svg style="left:3px;top:1141px;" width="16" height="15" viewBox="0 0 16 15"><path d="M1.5 2 L6 2 L6 6 L14.5 6 L14.5 13.5 L1.5 13.5 Z" fill="#fff" stroke="#2b79e3" stroke-width="1.1"/></svg>
<div style="left:21.7px;top:1140px;width:38.3px;height:17.59999999999991px;background:#fff;border:1px solid #e2e2e2;border-bottom:1px solid #9a9a9a"></div>
<div style="left:65px;top:1140px;width:154px;height:17.59999999999991px;background:#fff;border:1px solid #e2e2e2;border-bottom:1px solid #9a9a9a"></div>
<div class="t" style="left:68px;top:1141.5px;font-size:11px;line-height:15px;color:#111;font-weight:normal;">2. etasje</div>
<svg style="left:2px;top:1161px;" width="18" height="18" viewBox="0 0 18 18"><path d="M5.5 10 L17 10 L13 15.5 L1.5 15.5 Z" fill="#f0f0f0" stroke="#1f2a30" stroke-width="1.1" stroke-linejoin="round"/><path d="M5.5 6.5 L17 6.5 L13 12 L1.5 12 Z" fill="#f0f0f0" stroke="#1f2a30" stroke-width="1.1" stroke-linejoin="round"/><path d="M5.5 3 L17 3 L13 8.5 L1.5 8.5 Z" fill="#f0f0f0" stroke="#1f2a30" stroke-width="1.1" stroke-linejoin="round"/></svg>
<div class="t" style="left:21.1px;top:1162.5px;font-size:11px;line-height:15px;color:#111;font-weight:normal;">01 Skisse/forprosjekt (plan)</div>
<svg style="left:2px;top:1184px;" width="18" height="14" viewBox="0 0 18 14"><rect x="1.5" y="3.5" width="15" height="6" fill="none" stroke="#333" stroke-width="1"/><path d="M4 3.5 L4 6 M7 3.5 L7 6 M10 3.5 L10 6 M13 3.5 L13 6" stroke="#333" stroke-width="0.9"/></svg>
<div class="t" style="left:21.1px;top:1183.3px;font-size:11px;line-height:15px;color:#111;font-weight:normal;">1:100</div>
<svg style="left:2px;top:1205px;" width="18" height="14" viewBox="0 0 18 14"><rect x="1.5" y="2" width="15" height="10" fill="none" stroke="#333" stroke-width="1"/><rect x="4.5" y="5" width="9" height="4" fill="none" stroke="#333" stroke-width="1"/></svg>
<div class="t" style="left:21.1px;top:1204.5px;font-size:11px;line-height:15px;color:#111;font-weight:normal;">01 Skisse/forprosjekt</div>
<div style="left:3px;top:1225px;width:215.4px;height:20.200000000000045px;background:#fbfbfb;border:1px solid #d6d6d6;border-radius:3px"></div>
<div class="t" style="left:-89.3px;width:400px;text-align:center;top:1227.5px;font-size:11px;line-height:15px;color:#111;font-weight:normal;">Settings...</div>
<div style="left:236px;top:121.5px;width:21px;height:1.0px;background:#9a9a9a"></div>
<div style="left:223.4px;top:126px;width:46.29999999999998px;height:26.5px;background:#cce4f7;border:1px solid #9ccaf0;border-radius:3px"></div>
<svg style="left:238px;top:129px;" width="20" height="22" viewBox="0 0 20 22"><path d="M4 2 L15 10.5 L10 11 L12.5 17 L10.5 18 L8 12 L4 15.5 Z" fill="#8f9296" stroke="#1f2a30" stroke-width="1"/></svg>
<svg style="left:236px;top:161px;" width="22" height="18" viewBox="0 0 22 18"><rect x="1.5" y="1.5" width="18" height="14.5" fill="none" stroke="#1f2a30" stroke-width="1.1" stroke-dasharray="2.5 1.8"/></svg>
<div style="left:223.5px;top:189px;width:46.0px;height:19.80000000000001px;background:#d9d9d9;border-radius:3px"></div>
<div class="t" style="left:226px;top:191.5px;font-size:11px;line-height:15px;color:#111;font-weight:normal;transform:scaleX(1.197);transform-origin:left;">Design</div>
<svg style="left:226px;top:209.5px" width="44" height="32" viewBox="226 209.5 44 32"><path d="M237.5 222 L255.5 217 L255.5 228.5 L237.5 234.5 Z" fill="#fafafa" stroke="#1f2a30" stroke-width="1.15" stroke-linejoin="round"/></svg>
<svg style="left:226px;top:239.8px" width="44" height="32" viewBox="226 239.8 44 32"><path d="M237.5 252 L255.5 247.5 L255.5 259 L237.5 265 Z" fill="#fafafa" stroke="#1f2a30" stroke-width="1.15" stroke-linejoin="round"/><path d="M245.5 250 L245.5 262.3" fill="none" stroke="#1f2a30" stroke-width="1.15" stroke-linejoin="round"/></svg>
<svg style="left:226px;top:270.2px" width="44" height="32" viewBox="226 270.2 44 32"><path d="M241.5 278 L251.5 276.5 L251.5 293 L241.5 297 Z" fill="#fafafa" stroke="#1f2a30" stroke-width="1.15" stroke-linejoin="round"/><path d="M244 285 L246 284" fill="none" stroke="#1f2a30" stroke-width="1.15" stroke-linejoin="round"/></svg>
<svg style="left:226px;top:299px" width="44" height="32" viewBox="226 299 44 32"><path d="M238.5 309.5 L253.5 308.5 L253.5 321.5 L238.5 323.5 Z M246 309 L246 322.5 M238.5 316.5 L253.5 315" fill="#fafafa" stroke="#1f2a30" stroke-width="1.15" stroke-linejoin="round"/></svg>
<svg style="left:226px;top:329.5px" width="44" height="32" viewBox="226 329.5 44 32"><path d="M238.5 339 L253.5 338 L253.5 350 L238.5 353.5 Z M247.5 338.5 L247.5 348 L238.5 350.5 M247.5 348 L253.5 350" fill="#fafafa" stroke="#1f2a30" stroke-width="1.15" stroke-linejoin="round"/></svg>
<svg style="left:226px;top:360px" width="44" height="32" viewBox="226 360 44 32"><path d="M235 370 L245 368 L257.5 379 L247.5 381.5 Z" fill="#fafafa" stroke="#1f2a30" stroke-width="1.15" stroke-linejoin="round"/><path d="M234 375 Q245 373 258 375 L248 384 Z" fill="none" stroke="#1f2a30" stroke-width="1.1" stroke-linejoin="round"/></svg>
<svg style="left:226px;top:389px" width="44" height="32" viewBox="226 389 44 32"><path d="M236.5 398.5 L257.5 398 L257.5 409 L244.5 413.5 L236.5 409 Z M244.5 399 L244.5 413.5 M236.5 403.5 L244.5 407 L257.5 403 M240.5 398.5 L240.5 411.5 M251 398 L251 411" fill="#fafafa" stroke="#1f2a30" stroke-width="1.15" stroke-linejoin="round"/></svg>
<svg style="left:226px;top:419.6px" width="44" height="32" viewBox="226 419.6 44 32"><path d="M237.5 427.5 L253.5 427.5 L259.5 437.5 L249.5 436 L243.5 444.5 L232.5 437 Z M253.5 427.5 L249.5 436" fill="#fafafa" stroke="#1f2a30" stroke-width="1.15" stroke-linejoin="round"/></svg>
<svg style="left:226px;top:449.7px" width="44" height="32" viewBox="226 449.7 44 32"><path d="M233 461.5 Q246 467 259 456 L255.5 472.5 L248.5 468.5 L241.5 475.5 Z M259 456 L248.5 468.5" fill="#fafafa" stroke="#1f2a30" stroke-width="1.15" stroke-linejoin="round"/></svg>
<svg style="left:226px;top:479.7px" width="44" height="32" viewBox="226 479.7 44 32"><path d="M235.5 489.5 L255.5 496.5 L255.5 502.5 L235.5 493.5 Z M237.5 490.5 L237.5 494.5 M253.5 497 L253.5 501.5" fill="#fafafa" stroke="#1f2a30" stroke-width="1.15" stroke-linejoin="round"/></svg>
<svg style="left:226px;top:510.4px" width="44" height="32" viewBox="226 510.4 44 32"><path d="M242.5 518.5 Q246 516 249.5 518.5 L249.5 535 Q246 538.5 242.5 535 Z M242.5 518.5 Q246 521 249.5 518.5" fill="#fafafa" stroke="#1f2a30" stroke-width="1.15" stroke-linejoin="round"/></svg>
<svg style="left:226px;top:539px" width="44" height="32" viewBox="226 539 44 32"><path d="M232.5 557.5 L238 556 L238 552 L246.5 549 L259 554.5 L241.5 562 Z" fill="#fafafa" stroke="#1f2a30" stroke-width="1.15" stroke-linejoin="round"/></svg>
<svg style="left:226px;top:568.6px" width="44" height="32" viewBox="226 568.6 44 32"><path d="M234.5 579.5 L244 577 L248 580.5 L248 583 L252 586 L252 588 L258.5 589.5 L247.5 593.5 L243 590 L243 587 L239 584 L239 581 Z M239 581 L248 580.5 M243 587 L252 586 M243 590 L253 588.5" fill="#fafafa" stroke="#1f2a30" stroke-width="1.15" stroke-linejoin="round"/></svg>
<svg style="left:226px;top:600px" width="44" height="32" viewBox="226 600 44 32"><path d="M236.5 623.5 L236.5 615.5 L256.5 608.5 L256.5 616.5 M236.5 619.5 L256.5 612.5 M246.5 612 L246.5 620.5" fill="none" stroke="#1f2a30" stroke-width="1.15" stroke-linejoin="round"/></svg>
<svg style="left:226px;top:629px" width="44" height="32" viewBox="226 629 44 32"><path d="M230 640 Q240 637.5 246 638.5 Q253 641 259.5 649 L249.5 653.5 Q243 646 239 643 Q235 641 230 640 Z M238 642 L247 640 M243 646.5 L254 644 M246.5 638.5 L253.5 651 M238.5 639 L245 649.5" fill="#fafafa" stroke="#1f2a30" stroke-width="1.15" stroke-linejoin="round"/></svg>
<svg style="left:226px;top:659px" width="44" height="32" viewBox="226 659 44 32"><path d="M236.5 667 L256.5 666 L256.5 682 L236.5 685 Z M244.5 666.5 L244.5 684 M251.5 666 L251.5 683 M236.5 671.5 L256.5 670 M236.5 679.5 L256.5 677" fill="#fafafa" stroke="#1f2a30" stroke-width="1.15" stroke-linejoin="round"/></svg>
<svg style="left:226px;top:690px" width="44" height="32" viewBox="226 690 44 32"><path d="M236.5 697.5 L241.5 697.5 L241.5 700 Q244.5 703.5 247.5 700 L247.5 697.5 L250.5 697.5 L250.5 704.5 L256.5 704.5 L256.5 714.5 L250.5 714.5 L250.5 712 L241.5 712 L241.5 714.5 L236.5 714.5 Z M244 706.5 L251 706.5 M244 709 L251 709" fill="#fafafa" stroke="#1f2a30" stroke-width="1.15" stroke-linejoin="round"/></svg>
<svg style="left:226px;top:720px" width="44" height="32" viewBox="226 720 44 32"><path d="M239.5 743.5 L239.5 729 L246 727 L246 734 M239.5 737 L246 734 L254 737 L246.5 740 Z M246.5 740 L246.5 747 M254 737 L254 743.5" fill="none" stroke="#1f2a30" stroke-width="1.15" stroke-linejoin="round"/></svg>
<svg style="left:226px;top:748px" width="44" height="32" viewBox="226 748 44 32"><circle cx="246" cy="763.5" r="5.5" fill="#fafafa" stroke="#1f2a30" stroke-width="1.15" stroke-linejoin="round"/><path d="M244 769 L244 773.5 L248 773.5 L248 769 M243.5 764 L245 762 L247 765 L248.5 763" fill="none" stroke="#1f2a30" stroke-width="1.15" stroke-linejoin="round"/><path d="M236 763.5 L238.5 763.5 M253.5 763.5 L256 763.5 M238.5 756 L240.5 758 M253.5 756 L251.5 758 M238.5 771 L240.5 769 M253.5 771 L251.5 769" stroke="#1f2a30" stroke-width="1.1"/></svg>
<svg style="left:226px;top:778.4px" width="44" height="32" viewBox="226 778.4 44 32"><path d="M238.5 788.5 L246 784.5 L253.5 788.5 L253.5 800.5 L246 804.5 L238.5 800.5 Z M238.5 788.5 L246 792.5 L253.5 788.5 M246 792.5 L246 804.5 M244.5 787.5 L247 786.5" fill="#fafafa" stroke="#1f2a30" stroke-width="1.15" stroke-linejoin="round"/><path d="M240 801 L240 803.5 M242.5 802.5 L242.5 805" stroke="#1f2a30" stroke-width="1"/></svg>
<svg style="left:226px;top:808.6px" width="44" height="32" viewBox="226 808.6 44 32"><circle cx="246" cy="822.5" r="5.5" fill="#fafafa" stroke="#1f2a30" stroke-width="1.15" stroke-linejoin="round"/><path d="M245 820.5 L246.5 819.5 L246.5 825.5" fill="none" stroke="#1f2a30" stroke-width="1.15" stroke-linejoin="round"/><path d="M246 828 L246 837" stroke="#1f2a30" stroke-width="1.2" stroke-dasharray="2 1.6"/></svg>
<svg style="left:226px;top:840px" width="44" height="32" viewBox="226 840 44 32"><path d="M237.5 857 Q239 848 249 845.5 Q249.5 853 254.5 857 L246 865 Q241 861 237.5 862 Z M249 845.5 Q246 856 246 865" fill="#fafafa" stroke="#1f2a30" stroke-width="1.15" stroke-linejoin="round"/></svg>
<div style="left:223.5px;top:875px;width:46.0px;height:20px;background:#d9d9d9;border-radius:3px"></div>
<div class="t" style="left:224.5px;top:877.5px;font-size:11px;line-height:15px;color:#111;font-weight:normal;transform:scaleX(1.074);transform-origin:left;">Docume</div>
<svg style="left:226px;top:895.7px" width="44" height="32" viewBox="226 895.7 44 32"><path d="M233 911.5 L248.5 911.5 L248.5 917.5 L259 917.5" fill="none" stroke="#1f2a30" stroke-width="1.2"/><path d="M234.5 909.5 L237 906 L239.5 909.5 Z M251.5 915.5 L254 912 L256.5 915.5 Z" fill="#1f2a30"/></svg>
<svg style="left:226px;top:926px" width="44" height="32" viewBox="226 926 44 32"><path d="M235 945.5 L257 945.5" stroke="#1f2a30" stroke-width="1.2"/><path d="M242 942.5 L246 937.5 L250 942.5 Z" fill="#1f2a30"/></svg>
<svg style="left:226px;top:956px" width="44" height="32" viewBox="226 956 44 32"><path d="M236 975.5 L256 975.5 M236.5 972.5 L236.5 978.5 M255.5 972.5 L255.5 978.5" stroke="#1f2a30" stroke-width="1.1"/><text x="241" y="970" font-size="7" font-family="Liberation Sans" fill="#1f2a30">1.2</text></svg>
<svg style="left:226px;top:986.6px" width="44" height="32" viewBox="226 986.6 44 32"><path d="M235 1009 L249 996 M235 1009 L256 1009 M243 1001.5 Q247 1004 246 1009" fill="none" stroke="#1f2a30" stroke-width="1.1"/><text x="250" y="1001" font-size="8" font-family="Liberation Serif" fill="#1f2a30">α</text></svg>
<svg style="left:226px;top:1016.5999999999999px" width="44" height="32" viewBox="226 1016.5999999999999 44 32"><circle cx="245" cy="1034" r="5.8" fill="none" stroke="#1f2a30" stroke-width="1.1"/><path d="M245 1026 L245 1042 M237 1034 L253 1034" stroke="#1f2a30" stroke-width="1"/><text x="250" y="1027" font-size="6.5" font-family="Liberation Sans" fill="#1f2a30">1.2</text></svg>
<svg style="left:226px;top:1046px" width="44" height="32" viewBox="226 1046 44 32"><path d="M238 1072 Q238.5 1066 245 1063.5 M241 1063 L245 1063.5 L243 1067" fill="none" stroke="#1f2a30" stroke-width="1.1"/><text x="246" y="1059" font-size="6.5" font-family="Liberation Sans" fill="#1f2a30">1.2</text></svg>
<svg style="left:226px;top:1077px" width="44" height="32" viewBox="226 1077 44 32"><path d="M237.5 1102 L246 1084 L254.5 1102 M240.5 1095.5 L251.5 1095.5" fill="none" stroke="#1f2a30" stroke-width="1.1"/></svg>
<svg style="left:226px;top:1106px" width="44" height="32" viewBox="226 1106 44 32"><path d="M235 1127.5 L240.5 1122 M235 1127.5 L235 1123 M235 1127.5 L239.5 1127.5" fill="none" stroke="#1f2a30" stroke-width="1.5"/><text x="240" y="1127" font-size="12" font-family="Liberation Sans" fill="#1f2a30">A1</text></svg>
<svg style="left:226px;top:1136.6px" width="44" height="32" viewBox="226 1136.6 44 32"><path d="M236 1159 L238 1147.5 L249 1147.5 L257 1159 Z" fill="#fff" stroke="#1f2a30" stroke-width="1.1"/><path d="M237.5 1155 L245 1147.5 M238 1158.5 L249 1147.5 M242 1158.5 L252 1149 M246.5 1158.5 L254 1152" stroke="#1f2a30" stroke-width="1.2"/></svg>
<svg style="left:226px;top:1165.6px" width="44" height="32" viewBox="226 1165.6 44 32"><path d="M236 1191 L255 1172" stroke="#1f2a30" stroke-width="1.1"/></svg>
<svg style="left:226px;top:1196px" width="44" height="32" viewBox="226 1196 44 32"><circle cx="246" cy="1212" r="8.5" fill="none" stroke="#1f2a30" stroke-width="1.1"/></svg>
<div style="left:223px;top:1228px;width:46.39999999999998px;height:19.799999999999955px;background:#d9d9d9;border-radius:3px"></div>
<div class="t" style="left:226px;top:1230.5px;font-size:11px;line-height:15px;color:#111;font-weight:normal;">More</div>
<div style="left:272px;top:668px;width:16px;height:32px;background:#f2f2f2;border-radius:0 4px 4px 0"></div>
<svg style="left:272px;top:668px;" width="16" height="32" viewBox="0 0 16 32"><path d="M8.5 3 L8.5 30" stroke="#f5a04a" stroke-width="1.2" stroke-dasharray="4.5 2.6"/></svg>
<svg style="left:339px;top:279px;" width="800" height="824" viewBox="0 0 800 824"><path d="M1.5 1.5 L799 1.5 M1.5 1.5 L1.5 822 L799 822" fill="none" stroke="#19cbd9" stroke-width="1.4"/></svg>
<svg style="left:460px;top:370px;" width="480" height="320" viewBox="0 0 480 320"><rect x="18.399999999999977" y="8.699999999999989" width="454.0" height="300.7" fill="#fdfdef" stroke="#111" stroke-width="1.3"/><rect x="13.199999999999989" y="8.699999999999989" width="5.2" height="6" fill="#fdfdef" stroke="#111" stroke-width="1.2"/><line x1="18.399999999999977" y1="14.699999999999989" x2="447.4" y2="14.699999999999989" stroke="#111" stroke-width="1.2"/><line x1="447.4" y1="14.699999999999989" x2="447.4" y2="302" stroke="#111" stroke-width="1.2"/><line x1="453.5" y1="8.699999999999989" x2="453.5" y2="298.29999999999995" stroke="#111" stroke-width="1.2"/><line x1="447.4" y1="298.29999999999995" x2="453.5" y2="298.29999999999995" stroke="#111" stroke-width="1.2"/><line x1="58.5" y1="14.699999999999989" x2="58.5" y2="168.20000000000005" stroke="#111" stroke-width="1.2"/><line x1="99.5" y1="14.699999999999989" x2="99.5" y2="168.20000000000005" stroke="#111" stroke-width="1.2"/><line x1="139.20000000000005" y1="14.699999999999989" x2="139.20000000000005" y2="168.20000000000005" stroke="#111" stroke-width="1.2"/><line x1="180.5" y1="14.699999999999989" x2="180.5" y2="168.20000000000005" stroke="#111" stroke-width="1.2"/><line x1="220.29999999999995" y1="14.699999999999989" x2="220.29999999999995" y2="168.20000000000005" stroke="#111" stroke-width="1.2"/><line x1="261.29999999999995" y1="14.699999999999989" x2="261.29999999999995" y2="168.20000000000005" stroke="#111" stroke-width="1.2"/><line x1="18.399999999999977" y1="91.30000000000001" x2="294.4" y2="91.30000000000001" stroke="#111" stroke-width="1.2"/><rect x="13.199999999999989" y="168.20000000000005" width="5.2" height="6.2" fill="#fdfdef" stroke="#111" stroke-width="1.2"/><line x1="18.399999999999977" y1="168.20000000000005" x2="140" y2="168.20000000000005" stroke="#111" stroke-width="1.2"/><line x1="18.399999999999977" y1="174.39999999999998" x2="140" y2="174.39999999999998" stroke="#111" stroke-width="1.2"/><path d="M294.4 90.69999999999999 A76.3 76.3 0 0 1 370.79999999999995 167" fill="none" stroke="#111" stroke-width="0.9"/><line x1="370.79999999999995" y1="167" x2="370.79999999999995" y2="297.79999999999995" stroke="#111" stroke-width="1.2"/><line x1="326.70000000000005" y1="14.699999999999989" x2="294" y2="116" stroke="#111" stroke-width="1.2"/><line x1="402.9" y1="14.699999999999989" x2="332.29999999999995" y2="116" stroke="#111" stroke-width="1.2"/><line x1="447.4" y1="73.19999999999999" x2="347.20000000000005" y2="150.70000000000005" stroke="#111" stroke-width="1.2"/><line x1="447.4" y1="148.79999999999995" x2="347.20000000000005" y2="185.5" stroke="#111" stroke-width="1.2"/><line x1="347" y1="217.60000000000002" x2="447.29999999999995" y2="217.60000000000002" stroke="#111" stroke-width="1.2"/><line x1="294.6" y1="257.79999999999995" x2="447.29999999999995" y2="257.79999999999995" stroke="#111" stroke-width="1.2"/><line x1="294.6" y1="258.5" x2="370.79999999999995" y2="297.79999999999995" stroke="#111" stroke-width="1.0"/><line x1="370.79999999999995" y1="297.79999999999995" x2="447.29999999999995" y2="258.5" stroke="#111" stroke-width="1.0"/><line x1="294.6" y1="230" x2="294.6" y2="302" stroke="#111" stroke-width="1.2"/><line x1="294.6" y1="302" x2="447.4" y2="302" stroke="#111" stroke-width="1.2"/><line x1="288.4" y1="230" x2="288.4" y2="298.29999999999995" stroke="#111" stroke-width="1.2"/><line x1="288.4" y1="298.29999999999995" x2="294.6" y2="298.29999999999995" stroke="#111" stroke-width="1.2"/></svg>
<div style="left:597.3px;top:485.9px;width:209.80000000000007px;height:119.5px;background:#fff"></div>
<div class="t" style="left:597.5px;top:484.6px;font-size:31px;line-height:36px;color:#000;font-weight:normal;">103</div>
<div class="t" style="left:597.2px;top:521.0px;font-size:42px;line-height:48px;color:#000;font-weight:normal;">"Romnavn"</div>
<div class="t" style="left:597.5px;top:570.1px;font-size:30px;line-height:34px;color:#000;font-weight:normal;transform:scaleX(1.044);transform-origin:left;">5,8 m</div>
<div class="t" style="left:676.3px;top:570.3px;font-size:18px;line-height:20px;color:#000;font-weight:normal;">2</div>
<svg style="left:471px;top:454px;" width="15" height="15" viewBox="0 0 15 15"><circle cx="7.4" cy="7.3" r="5.7" fill="#a9a9a9" stroke="#3a6f78" stroke-width="1"/></svg>
<svg style="left:0px;top:0px" width="1759" height="56" viewBox="0 0 1759 56"><path d="M3.5 31.5 L3.5 44.5" stroke="#8a8a8a" stroke-width="1"/><path d="M15.5 30 L24 30 L27.5 33.5 L27.5 46 L15.5 46 Z M24 30 L24 33.5 L27.5 33.5" fill="none" stroke="#1f2a30" stroke-width="1.3" stroke-linejoin="round" stroke-linecap="round"/><path d="M40.7 35.6 L48.3 35.6 L44.5 40 Z" fill="#1f2a30"/><path d="M55.5 32 Q55.5 31 56.5 31 L67 31 L70.5 34.5 L70.5 44.5 Q70.5 45.5 69.5 45.5 L56.5 45.5 Q55.5 45.5 55.5 44.5 Z M59.5 31 L59.5 35 L66 35 L66 31 M58.5 45.5 L58.5 39.5 L67.5 39.5 L67.5 45.5" fill="none" stroke="#1f2a30" stroke-width="1.3" stroke-linejoin="round" stroke-linecap="round"/><path d="M84.5 36 L84.5 29.5 L93.5 29.5 L93.5 36 M80.5 36 L97.5 36 L97.5 42.5 L80.5 42.5 Z M81.5 42.5 L81.5 45.5 L96.5 45.5 L96.5 42.5 M86.5 32 L91.5 32 M86.5 34 L91.5 34 M93.5 40 L95.5 40" fill="none" stroke="#1f2a30" stroke-width="1.3" stroke-linejoin="round" stroke-linecap="round"/><path d="M104.5 24.5 L104.5 52" stroke="#8a8a8a" stroke-width="1"/><path d="M126 40 L126 33.5 L122 30 L118 30 Q117.5 30 117.5 31 L117.5 41 Q117.5 42 118.5 42 L121 42 M121.5 40 L121.5 45 Q121.5 46 122.5 46 L127 46 M126 40 L132 40 Q133.5 40 133.5 41.5 L133.5 44.5 Q133.5 46 132 46 L129 46" fill="none" stroke="#1f2a30" stroke-width="1.3" stroke-linejoin="round" stroke-linecap="round"/><path d="M144.95 35.6 L152.55 35.6 L148.75 40 Z" fill="#1f2a30"/><rect x="163" y="38.5" width="8" height="7" rx="1" fill="none" stroke="#1f2a30" stroke-width="1.3" stroke-linejoin="round" stroke-linecap="round"/><path d="M163.5 45 L170.5 39" fill="none" stroke="#1f2a30" stroke-width="1.3" stroke-linejoin="round" stroke-linecap="round"/><circle cx="176.7" cy="39.5" r="2.5" fill="none" stroke="#1f2a30" stroke-width="1.3" stroke-linejoin="round" stroke-linecap="round"/><path d="M172.5 46 L172.5 45 Q172.5 42.5 176.7 42.5 Q181 42.5 181 45 L181 46 Z" fill="none" stroke="#1f2a30" stroke-width="1.3" stroke-linejoin="round" stroke-linecap="round"/><path d="M167 34.5 Q170 29 176 32" fill="none" stroke="#1f6fe0" stroke-width="1.4" stroke-linejoin="round" stroke-linecap="round"/><path d="M165.5 32.5 L167 35 L169.5 33.5" fill="none" stroke="#1f6fe0" stroke-width="1.4" stroke-linejoin="round" stroke-linecap="round"/><path d="M190.7 35.6 L198.3 35.6 L194.5 40 Z" fill="#1f2a30"/><path d="M204.5 24.5 L204.5 52" stroke="#8a8a8a" stroke-width="1"/><circle cx="219.4" cy="35.6" r="5.2" fill="none" stroke="#1f6fe0" stroke-width="1.4"/><path d="M223 39.5 L229.5 46" stroke="#1f6fe0" stroke-width="1.4"/><rect x="217.2" y="33.4" width="4.5" height="4.5" rx="1" fill="#1f2a30"/><path d="M229 43 L229 33 M227.5 34.5 L229 33 L230.5 34.5 M219.5 42.5 L219.5 45.5 L226 45.5" fill="none" stroke="#1f2a30" stroke-width="1.2"/><circle cx="219.5" cy="45.5" r="1.3" fill="#1f2a30"/><path d="M237.5 24.5 L237.5 52" stroke="#8a8a8a" stroke-width="1"/><path d="M250.5 33 L258 29.5 L265.5 33 Z M252.5 34.5 L252.5 41 M255.5 34.5 L255.5 41 M258.5 34.5 L258.5 41 M261.5 34.5 L261.5 37 M250 42.5 L258 42.5" fill="none" stroke="#1f2a30" stroke-width="1.3" stroke-linejoin="round" stroke-linecap="round"/><rect x="258.5" y="38" width="9.5" height="8.5" rx="1.2" fill="#fff" stroke="#1f6fe0" stroke-width="1.4"/><path d="M258.5 40.5 L268 40.5 M260.5 43 L261 43 M262.5 43 L266 43 M260.5 45 L261 45" stroke="#1f6fe0" stroke-width="1"/><path d="M277.45 35.6 L285.05 35.6 L281.25 40 Z" fill="#1f2a30"/><path d="M298 31.5 L310 30.5 L312 32.5 L300 33.5 Z M296.5 35 L309 34 L311.5 36 M296.5 38.5 L303 38" fill="none" stroke="#1f2a30" stroke-width="1.3" stroke-linejoin="round" stroke-linecap="round"/><path d="M301 43.5 Q307.5 36.5 314 43.5 Q307.5 49.5 301 43.5 Z" fill="#f0f0f0" stroke="#1f2a30" stroke-width="1.3"/><circle cx="307.5" cy="43.3" r="2" fill="#1f2a30"/><path d="M323.7 35.6 L331.3 35.6 L327.5 40 Z" fill="#1f2a30"/><path d="M349 35 L349 30.5 L338.5 30.5 L338.5 44 L346 44 M342 34 L346 34 M342 37 L347 37 M344 30.5 L344 33" fill="none" stroke="#1f2a30" stroke-width="1.3" stroke-linejoin="round" stroke-linecap="round"/><path d="M347.5 40.5 Q348 37 352 37 L354.5 38.5 M352.5 41 L354.5 38.5 L352 37.5 M355 42 Q354.5 46 350 46 L348 45 M350 43.5 L348 45 L350.5 46" fill="none" stroke="#1f2a30" stroke-width="1.3" stroke-linejoin="round" stroke-linecap="round"/><path d="M366.5 32 L366.5 44 L378 44 L378 32" fill="none" stroke="#1f2a30" stroke-width="1" stroke-dasharray="1.5 1.2"/><rect x="364.5" y="42" width="3.5" height="3.5" fill="#1f2a30"/><rect x="376.5" y="42" width="3.5" height="3.5" fill="#1f2a30"/><rect x="376.5" y="29.5" width="3.5" height="3.5" fill="#1f2a30"/><rect x="364.5" y="30" width="3" height="3" fill="#1f2a30"/><path d="M367 43 L374 35.5 M371 32 L376 36.5 L373.5 39" fill="none" stroke="#1f2a30" stroke-width="1.3" stroke-linejoin="round" stroke-linecap="round"/><path d="M387.5 24.5 L387.5 52" stroke="#8a8a8a" stroke-width="1"/><path d="M396 39 Q398.5 31.5 405.5 32 Q413 32.5 413.5 40 Q413 44.5 410.5 45" fill="none" stroke="#1f2a30" stroke-width="1.3" stroke-linejoin="round" stroke-linecap="round"/><path d="M396 33.5 L396 39.5 L402 39.5" fill="none" stroke="#1f2a30" stroke-width="1.3" stroke-linejoin="round" stroke-linecap="round"/><path d="M438.5 39 Q436 31.5 429 32 Q421.5 32.5 421 40 Q421.5 44.5 424 45" fill="none" stroke="#a9a9a9" stroke-width="1.3" stroke-linejoin="round" stroke-linecap="round"/><path d="M438.5 33.5 L438.5 39.5 L432.5 39.5" fill="none" stroke="#a9a9a9" stroke-width="1.3" stroke-linejoin="round" stroke-linecap="round"/><path d="M445.6 24.5 L445.6 52" stroke="#8a8a8a" stroke-width="1"/><rect x="451.25" y="22.5" width="45.0" height="30" rx="3" fill="#c4dff5" stroke="#90c4f0" stroke-width="1"/><path d="M481.25 22.5 L481.25 52.5" stroke="#90c4f0" stroke-width="1"/><path d="M459.5 29.5 L459.5 46.5 L477 46.5" fill="none" stroke="#f08a20" stroke-width="1.2" stroke-dasharray="2 1.4"/><path d="M461.5 30 L476.5 44.5 L461.5 44.5 Z M464.5 37.5 L469.5 42 L464.5 42 Z" fill="none" stroke="#1f2a30" stroke-width="1.5" stroke-linejoin="miter"/><path d="M485.59999999999997 35.6 L493.2 35.6 L489.4 40 Z" fill="#1f2a30"/><rect x="497.75" y="22.5" width="23.25" height="30" rx="3" fill="#d2e8fa" stroke="#90c4f0" stroke-width="1"/><path d="M505 32.5 L517 32.5 M504.5 31.5 L504.5 39" fill="none" stroke="#1f6fe0" stroke-width="1.1" stroke-dasharray="2 1.3"/><circle cx="504.5" cy="41.5" r="1.8" fill="none" stroke="#1f6fe0" stroke-width="1.1"/><path d="M506.5 41.5 L517 41.5" stroke="#1f2a30" stroke-width="1.2"/><rect x="522.25" y="22.5" width="45.25" height="30" rx="3" fill="#c4dff5" stroke="#90c4f0" stroke-width="1"/><path d="M552.25 22.5 L552.25 52.5" stroke="#90c4f0" stroke-width="1"/><path d="M531 42.5 L545.5 42.5 M538 40 L538 45" stroke="#1f2a30" stroke-width="1.2"/><path d="M536.5 36 L540 39.5 L546.5 30.5" fill="none" stroke="#1f2a30" stroke-width="1.8"/><path d="M556.45 35.6 L564.05 35.6 L560.25 40 Z" fill="#1f2a30"/><path d="M576.3 33.1 L588.7 45.6 M581.2 30.6 L591.2 42.5" stroke="#1f2a30" stroke-width="1.5"/><path d="M602.45 35.6 L610.05 35.6 L606.25 40 Z" fill="#1f2a30"/><path d="M616.25 24.5 L616.25 52" stroke="#8a8a8a" stroke-width="1"/><rect x="622.25" y="22.5" width="45.5" height="30" rx="3" fill="#c4dff5" stroke="#90c4f0" stroke-width="1"/><path d="M652.5 22.5 L652.5 52.5" stroke="#90c4f0" stroke-width="1"/><path d="M631 30.5 L631 36 L632.5 34.5 L635 37 L636 36 L633.5 33.5 L635.5 33 Z" fill="#1f2a30"/><rect x="629.5" y="37.5" width="12.5" height="7.5" rx="1" fill="none" stroke="#1f2a30" stroke-width="1.2"/><text x="631" y="44" font-size="6.5" font-weight="bold" font-family="Liberation Sans" fill="#1f2a30">XY</text><path d="M644 40 L646 40 M644 43 L646 43" stroke="#1f2a30" stroke-width="1"/><path d="M656.8000000000001 35.6 L664.4 35.6 L660.6 40 Z" fill="#1f2a30"/><path d="M680.3 29 L680.3 47 M687.3 29 L687.3 47 M675.5 34.4 L692.5 34.4 M675.5 41.3 L692.5 41.3" stroke="#1f2a30" stroke-width="1" stroke-dasharray="2 1.5"/><rect x="678.5" y="32.6" width="3.6" height="3.6" fill="#1f2a30"/><rect x="685.5" y="32.6" width="3.6" height="3.6" fill="#1f2a30"/><rect x="678.5" y="39.5" width="3.6" height="3.6" fill="#1f2a30"/><rect x="685.5" y="39.5" width="3.6" height="3.6" fill="#1f2a30"/><path d="M702.7 35.6 L710.3 35.6 L706.5 40 Z" fill="#1f2a30"/><path d="M717.5 46.5 L717.5 29.5 L735 29.5 M722 46.5 L722 35 L734.5 35 M725 35 L725 32.5 M728 35 L728 32 M731 35 L731 32.5 M734 35 L734 32 M722 38 L724.5 38 M722 41 L725 41 M722 44 L724.5 44" fill="none" stroke="#1f2a30" stroke-width="1.3" stroke-linejoin="round" stroke-linecap="round"/><rect x="739.4" y="22.5" width="45.35000000000002" height="30" rx="3" fill="#c4dff5" stroke="#90c4f0" stroke-width="1"/><path d="M769.4 22.5 L769.4 52.5" stroke="#90c4f0" stroke-width="1"/><rect x="747.5" y="29.5" width="13.5" height="13.5" rx="2" fill="none" stroke="#1f2a30" stroke-width="1.4"/><path d="M750 45.5 L762 45.5 Q764 45.5 764 43.5 L764 32.5" fill="none" stroke="#1f6fe0" stroke-width="1.4"/><path d="M750.5 39 L750.5 32.5 L757.5 32.5" fill="none" stroke="#8a8a8a" stroke-width="1.1"/><path d="M773.7 35.6 L781.3 35.6 L777.5 40 Z" fill="#1f2a30"/><path d="M797.5 35.5 Q795.5 33 798 30.5 Q800.5 28.5 803 30.5 Q805.5 33 803.5 35.5 L806 36 L806 46.5 L795 46.5 L795 36 Z" fill="none" stroke="#a9a9a9" stroke-width="1.3" stroke-linejoin="round" stroke-linecap="round"/><path d="M819.7 35.6 L827.3 35.6 L823.5 40 Z" fill="#a0a0a0"/><path d="M834 31 L851.5 31 L851.5 45 L834 45 Z M836.5 31 L836.5 33.5 M839 31 L839 34 M841.5 31 L841.5 33.5 M844 31 L844 34 M846.5 31 L846.5 33.5 M849 31 L849 34" fill="none" stroke="#1f2a30" stroke-width="1.3" stroke-linejoin="round" stroke-linecap="round"/><text x="836.5" y="43.5" font-size="8" font-weight="bold" font-family="Liberation Sans" fill="#1f2a30">1 2</text><path d="M864.5 30 L864.5 37 L879 37 L879 30 M867.5 30 L867.5 34 L876 34 L876 30 M864.5 40.5 L864.5 46.5 M879 40.5 L879 46.5 M864.5 43.5 L879 43.5 M867 41.5 L864.5 43.5 L867 45.5 M876.5 41.5 L879 43.5 L876.5 45.5" fill="none" stroke="#1f2a30" stroke-width="1.3" stroke-linejoin="round" stroke-linecap="round"/><path d="M890.6 35.6 L898.1999999999999 35.6 L894.4 40 Z" fill="#1f2a30"/><path d="M908.5 32 L919.5 44 M919.5 32 L908.5 44" stroke="#1f2a30" stroke-width="1.2"/><rect x="911.5" y="35.5" width="5" height="5" rx="1" fill="#f0f0f0" stroke="#1f2a30" stroke-width="1.2"/><rect x="927.25" y="22.5" width="24.0" height="30" rx="3" fill="#d2e8fa" stroke="#90c4f0" stroke-width="1"/><rect x="931.5" y="29.5" width="3.5" height="3.5" fill="none" stroke="#1f2a30" stroke-width="1.3" stroke-linejoin="round" stroke-linecap="round"/><rect x="944" y="33" width="3.5" height="3.5" fill="none" stroke="#1f2a30" stroke-width="1.3" stroke-linejoin="round" stroke-linecap="round"/><rect x="931.5" y="35" width="3.5" height="3.5" fill="none" stroke="#1f2a30" stroke-width="1.3" stroke-linejoin="round" stroke-linecap="round"/><path d="M935 31.5 L944 34.5 M935 37 L944 36 M931.5 46 L941 46 M931.5 43 L937 41 M934 46 L938 43" fill="none" stroke="#1f2a30" stroke-width="1.3" stroke-linejoin="round" stroke-linecap="round"/><rect x="942" y="40" width="4.5" height="4.5" fill="#1f6fe0"/><path d="M948.5 39 L950 38 M948.5 42 L950.5 42 M947 45 L948.5 46.5" stroke="#1f6fe0" stroke-width="0.9"/><rect x="952.5" y="22.5" width="24.399999999999977" height="30" rx="3" fill="#d2e8fa" stroke="#90c4f0" stroke-width="1"/><path d="M957 29.5 L957 46.5" stroke="#1f2a30" stroke-width="2"/><path d="M962.5 29.5 L962.5 46.5" stroke="#1f2a30" stroke-width="1.1"/><path d="M963 39.5 L973.5 39.5" stroke="#1f2a30" stroke-width="2"/><rect x="980.5" y="40.5" width="15" height="6" fill="none" stroke="#1f2a30" stroke-width="1.3" stroke-linejoin="round" stroke-linecap="round"/><path d="M980.5 36.5 L985 32.5 M980.5 36.5 L980.5 33 M980.5 36.5 L984 36.5 M985 32.5 L988 32.5" fill="none" stroke="#1f2a30" stroke-width="1.3" stroke-linejoin="round" stroke-linecap="round"/><text x="988" y="37.5" font-size="9" font-family="Liberation Sans" fill="#1f2a30">A1</text><path d="M1005 35.5 L1022.5 35.5 M1005 46.5 L1022.5 46.5 M1009.5 29.5 L1018 29.5 L1013.7 34 Z" fill="none" stroke="#1f2a30" stroke-width="1.3" stroke-linejoin="round" stroke-linecap="round"/><path d="M1007 37.5 L1021 37.5 L1020 39 L1008 39 Z" fill="#555"/><path d="M1010 41 L1017.5 41 L1013.7 45.5 Z" fill="#1f2a30"/><path d="M1029.4 24.5 L1029.4 52" stroke="#8a8a8a" stroke-width="1"/><path d="M1040.5 46.5 L1040.5 31.5 L1055 31.5 M1051.5 29.5 L1051.5 34 M1038.5 44 L1043 44" fill="none" stroke="#1f2a30" stroke-width="1.3" stroke-linejoin="round" stroke-linecap="round"/><path d="M1064.5 46.5 Q1064.5 34 1076.5 31.5 M1062.5 44 L1067 44 M1076.5 29.5 L1076.5 34 M1074 31.5 L1080 31.5" fill="none" stroke="#1f2a30" stroke-width="1.3" stroke-linejoin="round" stroke-linecap="round"/><path d="M1066.5 43 L1076 33" stroke="#a0a0a0" stroke-width="1"/><path d="M1088 30.5 L1106 30.5" stroke="#1f6fe0" stroke-width="1.3"/><path d="M1097.5 32.5 L1097.5 41 M1094.5 35.5 L1097.5 32.5 L1100.5 35.5 M1092.5 41.5 L1092.5 46.5 M1096.9 41.5 L1096.9 46.5 M1101.3 41.5 L1101.3 46.5 M1103.5 41.5 L1103.5 46.5" fill="none" stroke="#1f2a30" stroke-width="1.3" stroke-linejoin="round" stroke-linecap="round"/><path d="M1120 42 Q1116.5 37.5 1118.5 34 L1122 31.5 L1125 33 L1124 35.5 L1127 38.5 L1124 41.5 Q1122.5 43.5 1120 42 Z M1124.5 38 L1134.5 45" fill="none" stroke="#1f2a30" stroke-width="1.3" stroke-linejoin="round" stroke-linecap="round"/><path d="M1144.7 35.6 L1152.3 35.6 L1148.5 40 Z" fill="#1f2a30"/><rect x="1164" y="30.5" width="6" height="14" fill="none" stroke="#1f2a30" stroke-width="1.3" stroke-linejoin="round" stroke-linecap="round"/><rect x="1172.5" y="30.5" width="8" height="5.5" fill="none" stroke="#1f2a30" stroke-width="1.3" stroke-linejoin="round" stroke-linecap="round"/><path d="M1173 38.5 L1173 45.5 L1175 43.5 L1177 46 L1178.2 45.2 L1176.3 42.8 L1179 42.5 Z" fill="#1f2a30"/><path d="M1190.6000000000001 35.6 L1198.2 35.6 L1194.4 40 Z" fill="#1f2a30"/><path d="M1204.4 24.5 L1204.4 52" stroke="#8a8a8a" stroke-width="1"/><path d="M1218.5 35.5 L1218.5 46 L1228.5 46" fill="none" stroke="#a0a0a0" stroke-width="1.2"/><circle cx="1218.5" cy="35" r="1.3" fill="none" stroke="#a0a0a0"/><circle cx="1218.5" cy="46" r="1.3" fill="none" stroke="#a0a0a0"/><circle cx="1228.5" cy="46" r="1.3" fill="none" stroke="#a0a0a0"/><rect x="1223" y="30" width="10.5" height="10.5" fill="none" stroke="#1f2a30" stroke-width="1.2"/><rect x="1221.5" y="28.5" width="3.2" height="3.2" fill="#fff" stroke="#1f2a30" stroke-width="1.1"/><rect x="1231.5" y="28.5" width="3.2" height="3.2" fill="#fff" stroke="#1f2a30" stroke-width="1.1"/><rect x="1221.5" y="38.8" width="3.2" height="3.2" fill="#fff" stroke="#1f2a30" stroke-width="1.1"/><rect x="1231.5" y="38.8" width="3.2" height="3.2" fill="#fff" stroke="#1f2a30" stroke-width="1.1"/><circle cx="1228" cy="34.5" r="1.2" fill="none" stroke="#a0a0a0"/><path d="M1244.3 35.6 L1251.8999999999999 35.6 L1248.1 40 Z" fill="#1f2a30"/><path d="M1258.5 24.5 L1258.5 52" stroke="#8a8a8a" stroke-width="1"/><path d="M1274 30.5 L1286 30.5 Q1287.5 30.5 1287.5 32 Q1287.5 33.5 1286 33.5 L1281.5 33.5 L1281.5 42.5 L1286 42.5 Q1287.5 42.5 1287.5 44 Q1287.5 45.5 1286 45.5 L1274 45.5 Q1272.5 45.5 1272.5 44 Q1272.5 42.5 1274 42.5 L1278.5 42.5 L1278.5 33.5 L1274 33.5 Q1272.5 33.5 1272.5 32 Q1272.5 30.5 1274 30.5 Z" fill="none" stroke="#1f2a30" stroke-width="1.4"/><path d="M1298.95 35.6 L1306.55 35.6 L1302.75 40 Z" fill="#1f2a30"/><rect x="1320.5" y="29.5" width="11" height="9" fill="none" stroke="#a0a0a0" stroke-width="1"/><path d="M1318 40.5 L1326 32.5 L1334 40.5 M1320.5 38.5 L1320.5 46.5 L1331.5 46.5 L1331.5 38.5" fill="none" stroke="#1f2a30" stroke-width="1.6" stroke-linejoin="round"/><path d="M1344.7 35.6 L1352.3 35.6 L1348.5 40 Z" fill="#1f2a30"/><path d="M1361.5 46 L1361.5 31 L1372 31 L1369 34.5 L1372 37.5 L1361.5 37.5" fill="none" stroke="#1f2a30" stroke-width="1.3" stroke-linejoin="round" stroke-linecap="round"/><path d="M1386.5 46 L1386.5 31 L1396.5 31 L1394 33.5 L1396 36 L1386.5 36" fill="none" stroke="#1f2a30" stroke-width="1.3" stroke-linejoin="round" stroke-linecap="round"/><path d="M1393.5 39.5 L1394.5 39.5 M1396.5 39.5 L1401 39.5 M1393.5 42.5 L1394.5 42.5 M1396.5 42.5 L1401 42.5 M1393.5 45.5 L1394.5 45.5 M1396.5 45.5 L1401 45.5" stroke="#1f6fe0" stroke-width="1.8"/><path d="M1415 45 Q1409 43 1409.5 38 Q1410 34.5 1413 34 Q1414 29.5 1418.5 29.5 Q1423.5 29.5 1424.5 34.5 Q1425.5 36 1425.5 37.5" fill="none" stroke="#1f2a30" stroke-width="1.3" stroke-linejoin="round" stroke-linecap="round"/><rect x="1417" y="38" width="10" height="8.5" rx="1" fill="#fff" stroke="#1f6fe0" stroke-width="1.4"/><path d="M1419 41 L1419.5 41 M1421 41 L1425 41 M1419 43.5 L1419.5 43.5 M1421 43.5 L1425 43.5" stroke="#1f6fe0" stroke-width="1"/><rect x="1438.5" y="29.5" width="17.5" height="17" fill="none" stroke="#1f2a30" stroke-width="1.5"/><path d="M1440 45 L1446 38 M1446 31.5 L1446 45 L1454.5 45 L1454.5 38 Z" fill="none" stroke="#555" stroke-width="1"/><rect x="1448" y="40.5" width="3.5" height="4.5" fill="none" stroke="#1f2a30" stroke-width="1.1"/><path d="M1465.6000000000001 35.6 L1473.2 35.6 L1469.4 40 Z" fill="#1f2a30"/><path d="M1485.5 38.5 L1490.5 29.5 L1492.5 32 M1487.5 42 L1487.5 38 L1494 32 L1498.5 31 L1498.5 35 M1490.5 45.5 L1490.5 41 L1497 35.5 L1500.5 36" fill="none" stroke="#1f2a30" stroke-width="1.3" stroke-linejoin="round" stroke-linecap="round"/><path d="M1493 45 L1493 42.5 Q1495 41 1496.5 42.5 L1496.5 45 M1498.5 45 L1498.5 42 L1500.5 42 L1500.5 45" fill="none" stroke="#1f2a30" stroke-width="1.3" stroke-linejoin="round" stroke-linecap="round"/><path d="M1511.2 35.6 L1518.8 35.6 L1515 40 Z" fill="#1f2a30"/><path d="M1526.5 41.5 L1526.5 34.5 L1533 29.5 L1540 31.5 L1543.5 35.5 M1533 29.5 L1536 35 L1543.5 35.5 M1526.5 41.5 L1535.5 41.5 M1536 35 L1536 39" fill="none" stroke="#1f2a30" stroke-width="1.3" stroke-linejoin="round" stroke-linecap="round"/><path d="M1536 44 L1539.5 46.5 L1544 39" fill="none" stroke="#1f6fe0" stroke-width="1.8"/><path d="M1550.4 24.5 L1550.4 52" stroke="#8a8a8a" stroke-width="1"/><path d="M1560.5 45.5 L1568 37.5" stroke="#1f6fe0" stroke-width="3" stroke-linecap="round"/><path d="M1560 46 L1573 33 M1567 31.5 L1574 38.5 M1572 33 L1575.5 29.5 Q1577 29 1577 30.5 L1573.5 34" fill="none" stroke="#1f2a30" stroke-width="1.3" stroke-linecap="round"/><path d="M1586.5 44.5 L1592 39" stroke="#1f6fe0" stroke-width="3" stroke-linecap="round"/><path d="M1584 47 L1586.5 44.5 L1597.5 33.5 M1593.5 30.5 L1600.5 37.5 M1597 30 L1601.5 34.5 M1599 28.5 L1603 32.5" fill="none" stroke="#1f2a30" stroke-width="1.3" stroke-linecap="round"/><path d="M1613.5 30.5 L1623 29 L1625 35 L1616.5 43 Z M1617 32 L1619.5 40 M1614.5 36 L1623.5 34" fill="none" stroke="#a8c8f0" stroke-width="1"/><path d="M1620.5 45.5 L1629 37" stroke="#b8b8b8" stroke-width="2.6" stroke-linecap="round"/><path d="M1619 46.5 L1630 35.5" stroke="#f0f0f0" stroke-width="1"/><path d="M1640.6000000000001 35.6 L1648.2 35.6 L1644.4 40 Z" fill="#8a8a8a"/></svg>
<div style="left:222.5px;top:56px;width:1.0px;height:60px;background:#d4d4d4"></div>
<div style="left:412.1px;top:55.4px;width:1.0px;height:59.1px;background:#9a9a9a"></div>
<div style="left:597.0px;top:55.4px;width:1.0px;height:59.1px;background:#9a9a9a"></div>
<div style="left:782.1px;top:55.4px;width:1.0px;height:59.1px;background:#9a9a9a"></div>
<div style="left:967.0px;top:55.4px;width:1.0px;height:59.1px;background:#9a9a9a"></div>
<div style="left:1706.9px;top:55.4px;width:1.0px;height:59.1px;background:#9a9a9a"></div>
<div class="t" style="left:232px;top:58.0px;font-size:10px;line-height:14px;color:#111;font-weight:normal;transform:scaleX(0.900);transform-origin:left;">Main:</div>
<div style="left:227.5px;top:75px;width:1.0px;height:22px;background:#777"></div>
<div class="t" style="left:232px;top:74.6px;font-size:10px;line-height:14px;color:#111;font-weight:normal;transform:scaleX(0.845);transform-origin:left;">All Selected: 1</div>
<div style="left:233.6px;top:90.6px;width:38.400000000000006px;height:16.400000000000006px;background:#fbfbfb;border:1px solid #d4d4d4;border-radius:3px"></div>
<svg style="left:236px;top:91px;" width="24" height="16" viewBox="0 0 24 16"><rect x="3" y="2.5" width="15" height="11" fill="none" stroke="#222" stroke-width="1" stroke-dasharray="2 1.2"/><path d="M5 11 L11 6 L15 6" fill="none" stroke="#222" stroke-width="1.1"/><rect x="3.5" y="9.5" width="3" height="3" fill="#222"/></svg>
<svg style="left:264px;top:95px;" width="6" height="8" viewBox="0 0 6 8"><path d="M1 0.5 L5 4 L1 7.5 Z" fill="#222"/></svg>
<div style="left:276px;top:90.6px;width:38px;height:16.400000000000006px;background:#fbfbfb;border:1px solid #d4d4d4;border-radius:3px"></div>
<svg style="left:279px;top:91px;" width="24" height="16" viewBox="0 0 24 16"><rect x="2.5" y="3.5" width="15" height="10" fill="none" stroke="#222" stroke-width="1" stroke-dasharray="2 1.2"/><path d="M15 2 L15 8 L16.5 7 L18 10 L19 9.5 L17.5 6.5 L19.5 6 Z" fill="#222"/></svg>
<svg style="left:306px;top:95px;" width="6" height="8" viewBox="0 0 6 8"><path d="M1 0.5 L5 4 L1 7.5 Z" fill="#222"/></svg>
<div style="left:317px;top:90.6px;width:39px;height:16.400000000000006px;background:#cce4f7;border:1px solid #9ccaf0;border-radius:3px"></div>
<svg style="left:328px;top:90px;" width="20" height="18" viewBox="0 0 20 18"><path d="M6 5 L12 11 Q14 14 11 15 Q8 16 6 13 L3 9" fill="none" stroke="#333" stroke-width="2.2"/><path d="M5 4 L9 2 M2 8 L5 6" stroke="#333" stroke-width="1.3"/></svg>
<div style="left:360px;top:80.4px;width:46px;height:27.299999999999997px;background:#fbfbfb;border:1px solid #d4d4d4;border-radius:3px"></div>
<svg style="left:364px;top:83px;" width="24" height="22" viewBox="0 0 24 22"><path d="M3 3 L9 3 L9 7 L15 7 L15 3 L19 3 L19 19 L15 19 L15 15 L9 15 L9 19 L3 19 Z M7 10 L17 10 M7 13 L17 13" fill="none" stroke="#333" stroke-width="1.1"/></svg>
<div style="left:395px;top:84px;width:1px;height:20px;background:#bbb"></div>
<svg style="left:397px;top:90px;" width="8" height="6" viewBox="0 0 8 6"><path d="M0.5 1 L7.5 1 L4 5 Z" fill="#222"/></svg>
<div class="t" style="left:416.7px;top:58.0px;font-size:10px;line-height:14px;color:#111;font-weight:normal;transform:scaleX(0.842);transform-origin:left;">Layer:</div>
<div style="left:418px;top:80.4px;width:173px;height:27.299999999999997px;background:#fbfbfb;border:1px solid #d4d4d4;border-radius:3px"></div>
<svg style="left:422px;top:87px;" width="22" height="14" viewBox="0 0 22 14"><path d="M2 7 Q11 -1 20 7 Q11 15 2 7 Z" fill="none" stroke="#222" stroke-width="1.2"/><circle cx="11" cy="7" r="3" fill="#222"/></svg>
<div class="t" style="left:444px;top:86.5px;font-size:11px;line-height:15px;color:#111;font-weight:normal;">862- M___Nettoareal</div>
<svg style="left:583px;top:89px;" width="6" height="10" viewBox="0 0 6 10"><path d="M1 1 L5 5 L1 9 Z" fill="#222"/></svg>
<div class="t" style="left:602px;top:58.0px;font-size:10px;line-height:14px;color:#111;font-weight:normal;transform:scaleX(0.894);transform-origin:left;">Construction Method:</div>
<svg style="left:608px;top:80px;" width="28" height="26" viewBox="0 0 28 26"><path d="M4 10 Q8 4 16 4 L23 7 L23 12 L18 18 L4 16 Z" fill="#f6f6f6" stroke="#333" stroke-width="1"/><path d="M4 16 L4 10 M16 4 L18 10 L23 7 M18 10 L18 18 M4 10 L18 10" stroke="#333" stroke-width="0.8" fill="none"/><rect x="2.5" y="14.5" width="3" height="3" fill="#111"/><rect x="16.5" y="16.5" width="3" height="3" fill="#111"/><rect x="21.5" y="11.5" width="3" height="3" fill="#111"/></svg>
<div style="left:646px;top:79.5px;width:43.700000000000045px;height:27.900000000000006px;background:#cce4f7;border:1px solid #9ccaf0;border-radius:3px"></div>
<svg style="left:651px;top:81px;" width="30" height="26" viewBox="0 0 30 26"><path d="M3 10 L9 5 L19 5 L25 10 L25 16 L17 20 L3 18 Z M3 10 L17 13 L25 10 M17 13 L17 20" fill="#e6f2fc" stroke="#555" stroke-width="0.9"/><path d="M3 18 L25 14" stroke="#222" stroke-width="1.1" stroke-dasharray="2.5 1.5"/><rect x="1.5" y="16.5" width="3" height="3" fill="#111"/><rect x="23.5" y="12.5" width="3" height="3" fill="#111"/></svg>
<svg style="left:683px;top:88px;" width="6" height="10" viewBox="0 0 6 10"><path d="M1 1 L5 5 L1 9 Z" fill="#222"/></svg>
<svg style="left:700px;top:82px;" width="24" height="24" viewBox="0 0 24 24"><path d="M2 22 L2 2 L22 2" fill="none" stroke="#222" stroke-width="1.4"/><path d="M5 22 L5 5 L22 5" fill="none" stroke="#444" stroke-width="0.8"/><path d="M16 8 L16 18 M14 10 L16 8 L18 10 M7 17 L14 17 M9 15 L7 17 L9 19" fill="none" stroke="#333" stroke-width="0.9"/></svg>
<svg style="left:744px;top:82px;" width="24" height="24" viewBox="0 0 24 24"><path d="M2 22 L2 2 L22 2" fill="none" stroke="#222" stroke-width="2.2"/><path d="M5 22 L5 5 L22 5" fill="none" stroke="#444" stroke-width="0.8"/><path d="M16 8 L16 18 M14 10 L16 8 L18 10 M7 17 L14 17 M9 15 L7 17 L9 19" fill="none" stroke="#333" stroke-width="0.9"/></svg>
<div class="t" style="left:787px;top:58.0px;font-size:10px;line-height:14px;color:#111;font-weight:normal;transform:scaleX(0.856);transform-origin:left;">ID and Properties:</div>
<div style="left:787.6px;top:81.9px;width:131.29999999999995px;height:22.099999999999994px;background:#fff;border:1px solid #e4e4e4;border-bottom:1px solid #7a7a7a;border-radius:2px"></div>
<div style="left:923.3px;top:80.6px;width:37.5px;height:26.900000000000006px;background:#fbfbfb;border:1px solid #d4d4d4;border-radius:3px"></div>
<svg style="left:928px;top:84px;" width="18" height="20" viewBox="0 0 18 20"><rect x="3" y="2" width="12" height="16" fill="none" stroke="#333" stroke-width="1.1"/><path d="M5 6 L13 6 M5 9 L13 9 M5 12 L13 12 M5 15 L13 15" stroke="#333" stroke-width="0.9"/></svg>
<svg style="left:953px;top:89px;" width="6" height="10" viewBox="0 0 6 10"><path d="M1 1 L5 5 L1 9 Z" fill="#222"/></svg>
<div class="t" style="left:971.8px;top:58.0px;font-size:10px;line-height:14px;color:#111;font-weight:normal;transform:scaleX(0.909);transform-origin:left;">Annotation:</div>
<div style="left:974px;top:80.6px;width:39.700000000000045px;height:26.900000000000006px;background:#f6f6f6;border:1px solid #e6e6e6;border-radius:3px"></div>
<svg style="left:978px;top:84px;" width="34" height="20" viewBox="0 0 34 20"><path d="M3 17 L9 11 M3 17 L3 12 M3 17 L8 17" fill="none" stroke="#aaa" stroke-width="1.4"/><text x="9" y="14" font-size="12" font-family="Liberation Sans" fill="#aaa">A1</text></svg>
<div style="left:1017.8px;top:80.6px;width:40.200000000000045px;height:26.900000000000006px;background:#f6f6f6;border:1px solid #e6e6e6;border-radius:3px"></div>
<svg style="left:1024px;top:84px;" width="22" height="20" viewBox="0 0 22 20"><path d="M11 2 L13.5 8 L20 8.3 L15 12.5 L16.8 19 L11 15.3 L5.2 19 L7 12.5 L2 8.3 L8.5 8 Z" fill="none" stroke="#aaa" stroke-width="1.1"/></svg>
<svg style="left:1050px;top:89px;" width="6" height="10" viewBox="0 0 6 10"><path d="M1 1 L5 5 L1 9 Z" fill="#bbb"/></svg>
<div class="t" style="right:77.59999999999991px;top:76.8px;font-size:11px;line-height:15px;color:#111;font-weight:normal;">Takplan (Home + 1)</div>
<div style="left:1689.4px;top:78px;width:11.899999999999864px;height:11px;background:#fbfbfb;border:1px solid #d4d4d4;border-radius:3px"></div>
<svg style="left:1692px;top:79px;" width="6" height="9" viewBox="0 0 6 9"><path d="M1 1 L5 4.5 L1 8 Z" fill="#222"/></svg>
<div class="t" style="right:86.40000000000009px;top:97.5px;font-size:11px;line-height:15px;color:#111;font-weight:normal;">3. 2. etasje (Current)</div>
<div style="left:1689.4px;top:98.7px;width:11.899999999999864px;height:11.700000000000003px;background:#fbfbfb;border:1px solid #d4d4d4;border-radius:3px"></div>
<svg style="left:1692px;top:100px;" width="6" height="9" viewBox="0 0 6 9"><path d="M1 1 L5 4.5 L1 8 Z" fill="#222"/></svg>
<div class="t" style="left:1712.2px;top:57.7px;font-size:10px;line-height:14px;color:#111;font-weight:normal;">Bottom and</div>
<svg style="left:1713px;top:80px;" width="44" height="34" viewBox="0 0 44 34"><path d="M6 3 L20 3 L20 17 L6 17 Z" fill="none" stroke="#222" stroke-width="1.2"/><path d="M11 8 L25 8 L25 22 L11 22 Z M6 3 L11 8 M20 3 L25 8 M6 17 L11 22" fill="none" stroke="#222" stroke-width="1.2"/><path d="M20 17 L25 22 M11 15 L20 15" stroke="#444" stroke-width="0.8" stroke-dasharray="1.5 1.2"/><path d="M25 9 L36 9 M25 20 L36 20 M25 30 L36 30" stroke="#222" stroke-width="1" stroke-dasharray="1.8 1.4"/><path d="M37 9 L37 30 M34.5 11.5 L37 9 L39.5 11.5 M34.5 17.5 L37 20 L39.5 17.5 M34.5 22.5 L37 20 L39.5 22.5 M34.5 27.5 L37 30 L39.5 27.5" fill="none" stroke="#222" stroke-width="1.1"/><path d="M4 26 L21 26 L25 30.5 L8 30.5 Z" fill="#8f8f8f"/></svg>
<div style="left:1756px;top:78px;width:3px;height:30px;background:#fff;border-left:1px solid #ddd"></div>
<div style="left:271px;top:116.5px;width:26px;height:22.5px;background:#d4d4d4"></div>
<svg style="left:274px;top:118px;" width="20" height="20" viewBox="0 0 20 20"><rect x="2.5" y="3.5" width="6" height="5" rx="0.5" fill="none" stroke="#333" stroke-width="1.1"/><rect x="11.5" y="3.5" width="6" height="5" rx="0.5" fill="none" stroke="#333" stroke-width="1.1"/><rect x="2.5" y="11.5" width="6" height="5" rx="0.5" fill="none" stroke="#333" stroke-width="1.1"/><rect x="11.5" y="11.5" width="6" height="5" rx="0.5" fill="none" stroke="#333" stroke-width="1.1"/></svg>
<div style="left:297px;top:116.5px;width:300.5px;height:22.5px;background:#fff"></div>
<svg style="left:300px;top:119px;" width="20" height="17" viewBox="0 0 20 17"><path d="M1.5 2 L6.5 2 L6.5 7 L17.5 7 L17.5 15 L1.5 15 Z" fill="#fff" stroke="#2b79e3" stroke-width="1.2"/><path d="M3.5 2 L3.5 5 L5 3.5" fill="none" stroke="#2b79e3" stroke-width="0.8"/></svg>
<div class="t" style="left:321px;top:120.5px;font-size:11px;line-height:15px;color:#111;font-weight:normal;">2. etasje [3. 2. etasje]</div>
<svg style="left:579px;top:122px;" width="11" height="11" viewBox="0 0 11 11"><path d="M2 2 L9 9 M9 2 L2 9" stroke="#222" stroke-width="1.5"/></svg>
<svg style="left:603px;top:119px;" width="16" height="19" viewBox="0 0 16 19"><path d="M1.5 2 L10 4 L10 16 L1.5 14 Z" fill="#fff" stroke="#333" stroke-width="1.1"/><path d="M10 4 Q15 6 14 10 Q13 15 10 16" fill="none" stroke="#333" stroke-width="1.1"/></svg>
<div class="t" style="left:621px;top:120.5px;font-size:11px;line-height:15px;color:#111;font-weight:normal;transform:scaleX(1.025);transform-origin:left;">[3D / All]</div>
<div style="left:895.5px;top:117px;width:1.0px;height:21px;background:#b8b8b8"></div>
<div style="left:1132.8px;top:1212px;width:31.0px;height:13px;background:#f4f4f4;border-radius:4px 4px 0 0"></div>
<svg style="left:1132.8px;top:1212px;" width="31" height="15" viewBox="0 0 31 15"><path d="M3 7.5 L29 7.5" stroke="#f5a04a" stroke-width="1.2" stroke-dasharray="4.5 2.6"/></svg>
<svg style="left:272.0px;top:1228.0px;" width="20" height="20" viewBox="0 0 20 20"><path d="M5 7 Q8 3 12 4 Q17 5 17 10 Q17 15 12 16 Q8 17 6 13 M2 6 L5 7 L6 4" fill="none" stroke="#333" stroke-width="1.1" stroke-linejoin="round"/><path d="M3 16 L7 12" fill="none" stroke="#333" stroke-width="1.1" stroke-linejoin="round"/></svg>
<svg style="left:294.0px;top:1228.0px;" width="20" height="20" viewBox="0 0 20 20"><path d="M15 7 Q12 3 8 4 Q3 5 3 10 Q3 15 8 16 Q12 17 14 13 M18 6 L15 7 L14 4 M13 13 L18 18" fill="none" stroke="#c4c4c4" stroke-width="1.1"/></svg>
<svg style="left:317.8px;top:1228.0px;" width="20" height="20" viewBox="0 0 20 20"><circle cx="9" cy="9" r="6" fill="none" stroke="#333" stroke-width="1.1" stroke-linejoin="round"/><path d="M13.5 13.5 L18 18 M6 9 L12 9 M9 6 L9 12" fill="none" stroke="#333" stroke-width="1.1" stroke-linejoin="round"/></svg>
<div style="left:342.3px;top:1229px;width:1.0px;height:18px;background:#a8a8a8"></div>
<svg style="left:346.0px;top:1228.0px;" width="20" height="20" viewBox="0 0 20 20"><circle cx="9" cy="9" r="6" fill="none" stroke="#333" stroke-width="1.1" stroke-linejoin="round"/><path d="M13.5 13.5 L18 18" fill="none" stroke="#333" stroke-width="1.1" stroke-linejoin="round"/><path d="M6 7 L6 5 L8 5 M12 5 L12 5 M10 5 L12 5 L12 7 M6 11 L6 13 L8 13 M12 11 L12 13 L10 13" fill="none" stroke="#333" stroke-width="1.1" stroke-linejoin="round"/><circle cx="9" cy="9" r="1.5" fill="#222"/></svg>
<div class="t" style="left:227px;width:400px;text-align:center;top:1230.5px;font-size:11px;line-height:15px;color:#111;font-weight:normal;">357%</div>
<svg style="left:483px;top:1233px;" width="6" height="10" viewBox="0 0 6 10"><path d="M1 1 L5 5 L1 9 Z" fill="#222"/></svg>
<div style="left:496.5px;top:1229px;width:1.0px;height:18px;background:#a8a8a8"></div>
<svg style="left:500.5px;top:1228.0px;" width="20" height="20" viewBox="0 0 20 20"><path d="M3 10 L9 4 L15 10 L9 16 Z" fill="none" stroke="#333" stroke-width="1.1" stroke-linejoin="round"/><path d="M12 17 Q17 16 17 11 M15 13 L17 11 L19 13" fill="none" stroke="#333" stroke-width="1.1" stroke-linejoin="round"/></svg>
<div class="t" style="left:381.4px;width:400px;text-align:center;top:1230.5px;font-size:11px;line-height:15px;color:#111;font-weight:normal;">0,000°</div>
<svg style="left:637.4px;top:1233px;" width="6" height="10" viewBox="0 0 6 10"><path d="M1 1 L5 5 L1 9 Z" fill="#222"/></svg>
<div style="left:649.5px;top:1229px;width:1.0px;height:18px;background:#a8a8a8"></div>
<svg style="left:654.8px;top:1228.0px;" width="20" height="20" viewBox="0 0 20 20"><rect x="2.5" y="6.5" width="15" height="7" fill="none" stroke="#333" stroke-width="1.1"/><path d="M5 6.5 L5 9 M8 6.5 L8 9.5 M11 6.5 L11 9 M14 6.5 L14 9.5" stroke="#333" stroke-width="1"/></svg>
<div class="t" style="left:535.7px;width:400px;text-align:center;top:1230.5px;font-size:11px;line-height:15px;color:#111;font-weight:normal;">1:100</div>
<svg style="left:790.4px;top:1233px;" width="6" height="10" viewBox="0 0 6 10"><path d="M1 1 L5 5 L1 9 Z" fill="#222"/></svg>
<div style="left:802.5px;top:1229px;width:1.0px;height:18px;background:#a8a8a8"></div>
<svg style="left:807.0px;top:1228.0px;" width="20" height="20" viewBox="0 0 20 20"><path d="M6 11 L18 11 L14 16 L2 16 Z" fill="#f0f0f0" stroke="#222" stroke-width="1.1"/><path d="M6 7.5 L18 7.5 L14 12.5 L2 12.5 Z" fill="#f0f0f0" stroke="#222" stroke-width="1.1"/><path d="M6 4 L18 4 L14 9 L2 9 Z" fill="#f0f0f0" stroke="#222" stroke-width="1.1"/></svg>
<div class="t" style="left:834px;top:1230.5px;font-size:11px;line-height:15px;color:#111;font-weight:normal;transform:scaleX(1.052);transform-origin:left;">01 Skisse/forprosje...</div>
<svg style="left:944px;top:1233px;" width="6" height="10" viewBox="0 0 6 10"><path d="M1 1 L5 5 L1 9 Z" fill="#222"/></svg>
<div style="left:955.5px;top:1229px;width:1.0px;height:18px;background:#a8a8a8"></div>
<svg style="left:959.0px;top:1228.0px;" width="20" height="20" viewBox="0 0 20 20"><rect x="2.5" y="3.5" width="15" height="13" fill="none" stroke="#333" stroke-width="1.1"/><path d="M2.5 7 L17.5 7 M5 10 L15 10 M5 13 L15 13 M6 7 L4 10 M10 7 L8 10 M14 7 L12 10" stroke="#333" stroke-width="0.9"/></svg>
<div class="t" style="left:1008px;top:1230.5px;font-size:11px;line-height:15px;color:#111;font-weight:normal;transform:scaleX(1.069);transform-origin:left;">Entire Model</div>
<svg style="left:1096.6px;top:1233px;" width="6" height="10" viewBox="0 0 6 10"><path d="M1 1 L5 5 L1 9 Z" fill="#222"/></svg>
<div style="left:1108.5px;top:1229px;width:1.0px;height:18px;background:#a8a8a8"></div>
<svg style="left:1112px;top:1226px" width="22" height="24" viewBox="1112 1226 22 24"><path d="M1119.5 1230.5 L1119.5 1241.5 L1122.6 1246 L1125.7 1241.5 L1125.7 1230.5 M1119.5 1241.5 L1125.7 1241.5" fill="none" stroke="#1f2a30" stroke-width="1.2" stroke-linejoin="round"/></svg>
<div class="t" style="left:1154px;top:1230.5px;font-size:11px;line-height:15px;color:#111;font-weight:normal;">02 Penner 1:100</div>
<svg style="left:1250px;top:1233px;" width="6" height="10" viewBox="0 0 6 10"><path d="M1 1 L5 5 L1 9 Z" fill="#222"/></svg>
<div style="left:1261.5px;top:1229px;width:1.0px;height:18px;background:#a8a8a8"></div>
<svg style="left:1266.0px;top:1228.0px;" width="20" height="20" viewBox="0 0 20 20"><rect x="2.5" y="4.5" width="15" height="11" fill="none" stroke="#333" stroke-width="1.1"/><rect x="5.5" y="7.5" width="9" height="5" fill="none" stroke="#333" stroke-width="1.1"/></svg>
<div class="t" style="left:1293.5px;top:1230.5px;font-size:11px;line-height:15px;color:#111;font-weight:normal;transform:scaleX(1.048);transform-origin:left;">01 Skisse/forprosjekt</div>
<svg style="left:1402px;top:1233px;" width="6" height="10" viewBox="0 0 6 10"><path d="M1 1 L5 5 L1 9 Z" fill="#222"/></svg>
<div style="left:1415.5px;top:1229px;width:1.0px;height:18px;background:#a8a8a8"></div>
<svg style="left:1419.5px;top:1228.0px;" width="20" height="20" viewBox="0 0 20 20"><path d="M3 3 L9 3 L9 6 M3 3 L3 14 L7 14 M5 6 L8 6" fill="none" stroke="#333" stroke-width="1"/><rect x="9" y="8" width="8" height="9" fill="none" stroke="#333" stroke-width="1.1"/><path d="M11 11 L15 11 M11 14 L15 14" stroke="#333" stroke-width="0.9"/></svg>
<div class="t" style="left:1447px;top:1230.5px;font-size:11px;line-height:15px;color:#111;font-weight:normal;transform:scaleX(1.048);transform-origin:left;">01 Skisse/forprosjekt</div>
<svg style="left:1555px;top:1233px;" width="6" height="10" viewBox="0 0 6 10"><path d="M1 1 L5 5 L1 9 Z" fill="#222"/></svg>
<div style="left:1567.5px;top:1229px;width:1.0px;height:18px;background:#a8a8a8"></div>
<svg style="left:1572.0px;top:1228.0px;" width="20" height="20" viewBox="0 0 20 20"><path d="M3 17 L10 4 L10 17 Z M10 9 L16 11 L16 17 L3 17" fill="none" stroke="#333" stroke-width="1"/><rect x="11" y="12" width="3" height="5" fill="none" stroke="#333" stroke-width="0.9"/></svg>
<div class="t" style="left:1625.7px;top:1230.5px;font-size:11px;line-height:15px;color:#111;font-weight:normal;transform:scaleX(1.027);transform-origin:left;">01 Nybygg</div>
<svg style="left:1707.7px;top:1233px;" width="6" height="10" viewBox="0 0 6 10"><path d="M1 1 L5 5 L1 9 Z" fill="#222"/></svg>
<div style="left:1721.3px;top:1229px;width:1.0px;height:18px;background:#a8a8a8"></div>
<svg style="left:1727.0px;top:1228.0px;" width="20" height="20" viewBox="0 0 20 20"><path d="M3 11 L9 5 L15 5 M5 14 L5 9 L12 7 L17 9 M8 18 L8 14 L14 13" fill="none" stroke="#333" stroke-width="1.1" stroke-linejoin="round"/><rect x="11" y="12" width="7" height="6" fill="none" stroke="#333" stroke-width="1.1" stroke-linejoin="round"/></svg>
<div style="left:530px;top:1250px;width:25px;height:2px;background:#cce4f7;border:1px solid #9ccaf0;border-bottom:none;border-radius:3px 3px 0 0"></div>
<div style="left:1063px;top:51px;width:529px;height:1098.5px;background:#f0f0f0;border:1px solid #a9a9a9;border-radius:8px;box-shadow:0 12px 44px rgba(0,0,0,0.26), 0 2px 6px rgba(0,0,0,0.10)"></div>
<div style="left:1064px;top:52px;width:527px;height:29px;background:#f3f3f3;border-radius:8px 8px 0 0"></div>
<svg style="left:1072px;top:59px;" width="16" height="14" viewBox="0 0 16 14"><path d="M2 12 Q5 2 12 3" fill="none" stroke="#2b6ad8" stroke-width="1.8"/><circle cx="13" cy="9" r="1" fill="#2b6ad8"/></svg>
<div class="t" style="left:1093.6px;top:58.5px;font-size:12px;line-height:16px;color:#8a8a8a;font-weight:normal;">Zone Selection Settings</div>
<div class="t" style="left:1323px;width:400px;text-align:center;top:57.0px;font-size:13px;line-height:18px;color:#9a9a9a;font-weight:normal;">?</div>
<svg style="left:1561px;top:60px;" width="13" height="13" viewBox="0 0 13 13"><path d="M1 1 L12 12 M12 1 L1 12" stroke="#777" stroke-width="1.1"/></svg>
<div style="left:1080.5px;top:93.6px;width:37.09999999999991px;height:21.80000000000001px;background:#fbfbfb;border:1px solid #d4d4d4;border-radius:3px;"></div>
<svg style="left:1085px;top:95px;" width="20" height="18" viewBox="0 0 20 18"><path d="M10 2 L12.3 7.6 L18 7.8 L13.5 11.4 L15.2 17 L10 13.8 L4.8 17 L6.5 11.4 L2 7.8 L7.7 7.6 Z" fill="none" stroke="#333" stroke-width="1.1"/></svg>
<svg style="left:1108px;top:100px;" width="6" height="9" viewBox="0 0 6 9"><path d="M1 1 L5 4.5 L1 8 Z" fill="#222"/></svg>
<div class="t" style="right:183.5999999999999px;top:97.6px;font-size:11px;line-height:15px;color:#111;font-weight:normal;">Selected: 1 Editable: 1</div>
<div style="left:1079px;top:127.2px;width:497px;height:21.799999999999997px;background:#d9d9d9;border-radius:3px"></div>
<svg style="left:1084px;top:134.1px;" width="10" height="8" viewBox="0 0 10 8"><path d="M1 2 L9 2 L5 7 Z" fill="#333"/></svg>
<svg style="left:1099px;top:128.1px;" width="22" height="20" viewBox="0 0 22 20"><rect x="4.5" y="2.5" width="10" height="15" rx="0.8" fill="none" stroke="#1f2a30" stroke-width="1.25" stroke-linejoin="round"/><rect x="6.5" y="4.5" width="6" height="5" rx="0.5" fill="none" stroke="#1f2a30" stroke-width="1.25" stroke-linejoin="round"/><path d="M8.5 7 L10.5 7 M6.5 12 L6.5 14 M6.5 12 L7.5 12" stroke="#1f2a30" stroke-width="1.1"/></svg>
<div class="t" style="left:1125.4px;top:130.6px;font-size:11px;line-height:15px;color:#111;font-weight:bold;">NAME AND POSITIONING</div>
<div class="t" style="left:1079px;top:156.8px;font-size:11px;line-height:15px;color:#111;font-weight:normal;transform:scaleX(1.031);transform-origin:left;">Top Link:</div>
<div style="left:1079.3px;top:174.5px;width:212.4000000000001px;height:22.30000000000001px;background:#fff;border:1px solid #7a7a7a;border-radius:2px"></div>
<div class="t" style="left:1086.3px;top:178.15px;font-size:11px;line-height:15px;color:#111;font-weight:normal;transform:scaleX(1.021);transform-origin:left;">4. Takplan (Home + 1)</div>
<svg style="left:1275.7px;top:181.65px;" width="12" height="8" viewBox="0 0 12 8"><path d="M1.5 1.5 L6 6 L10.5 1.5" fill="none" stroke="#333" stroke-width="1"/></svg>
<div style="left:1307px;top:174.6px;width:1px;height:255.4px;background:#a0a0a0"></div>
<div class="t" style="left:1322.2px;top:156.8px;font-size:11px;line-height:15px;color:#111;font-weight:normal;">Number:</div>
<div style="left:1322.5px;top:174.6px;width:252.9000000000001px;height:21.80000000000001px;background:#fff;border:1px solid #e1e1e1;border-bottom:1px solid #8a8a8a;border-radius:2px"></div>
<div class="t" style="left:1327.5px;top:178.5px;font-size:11px;line-height:15px;color:#111;font-weight:normal;">104</div>
<div class="t" style="left:1322.2px;top:201.6px;font-size:11px;line-height:15px;color:#111;font-weight:normal;">Name:</div>
<div style="left:1322.5px;top:219.7px;width:228.5px;height:21.80000000000001px;background:#fff;border:1px solid #e1e1e1;border-bottom:1px solid #8a8a8a;border-radius:2px"></div>
<div class="t" style="left:1327.5px;top:223.6px;font-size:11px;line-height:15px;color:#111;font-weight:normal;">"Romnavn"</div>
<div style="left:1563px;top:223px;width:11.5px;height:15px;background:#fbfbfb;border:1px solid #d4d4d4;border-radius:3px;"></div>
<svg style="left:1565.75px;top:225.5px;" width="6" height="10" viewBox="0 0 6 10"><path d="M1 1 L5 5 L1 9 Z" fill="#222"/></svg>
<div class="t" style="left:1322.2px;top:246.8px;font-size:11px;line-height:15px;color:#111;font-weight:normal;">Category:</div>
<div style="left:1323px;top:265.5px;width:251.5px;height:20.19999999999999px;background:#fbfbfb;border:1px solid #d0d0d0;border-radius:3px"></div>
<div style="left:1547px;top:267px;width:16px;height:17.5px;background:#fdfdf0"></div>
<div class="t" style="left:1328.5px;top:268.1px;font-size:11px;line-height:15px;color:#111;font-weight:normal;transform:scaleX(1.039);transform-origin:left;">11   Oppholdsrom</div>
<svg style="left:1565px;top:271px;" width="6" height="10" viewBox="0 0 6 10"><path d="M1 1 L5 5 L1 9 Z" fill="#222"/></svg>
<div class="t" style="left:1322.2px;top:306.6px;font-size:11px;line-height:15px;color:#111;font-weight:normal;">Zone Polygon:</div>
<div style="left:1322.5px;top:324px;width:29.299999999999955px;height:25.600000000000023px;background:#cce4f7;border:1px solid #8cc2ee;border-radius:2px"></div>
<svg style="left:1318px;top:318px" width="130" height="52" viewBox="1318 318 130 52"><path d="M1326.2 343 L1326.2 334.4 Q1330 327 1335.5 326.8 L1346.8 328.6 L1346.8 338 M1326.2 334.4 L1340.2 337.7 L1346.8 331 M1340.2 337.7 L1340.2 341" fill="none" stroke="#8a8a8a" stroke-width="1"/><path d="M1325.6 343.4 L1341.5 346.6 M1341.5 341 L1346.5 338.3" fill="none" stroke="#1f2a30" stroke-width="1.2"/><rect x="1324" y="341.8" width="3.4" height="3.4" fill="#1f2a30"/><rect x="1339.8" y="345" width="3.4" height="3.4" fill="#1f2a30"/><rect x="1344.8" y="336.6" width="3.4" height="3.4" fill="#1f2a30"/><path d="M1357 347 L1357 327.8 L1378 327.8 M1359.8 347 L1359.8 330.5 L1378 330.5" fill="none" stroke="#1f2a30" stroke-width="1.2"/><path d="M1372.5 336 L1372.5 331.5 M1370.3 333.7 L1372.5 331.5 L1374.7 333.7 M1364.5 342.5 L1360.5 342.5 M1362.7 340.3 L1360.5 342.5 L1362.7 344.7 M1369.5 342.5 L1375.5 342.5 M1372.5 339.5 L1372.5 345.5" fill="none" stroke="#1f2a30" stroke-width="1"/><path d="M1372.5 336.5 L1372.5 339 M1365 342.5 L1368.5 342.5" stroke="#1f2a30" stroke-width="1" stroke-dasharray="1.2 1"/><path d="M1386.8 347 L1386.8 327.5 L1408 327.5 M1391.3 347 L1391.3 332 L1408 332" fill="none" stroke="#9a9a9a" stroke-width="1"/><path d="M1389 347 L1389 329.7 L1408 329.7" fill="none" stroke="#1f2a30" stroke-width="2"/><path d="M1402.5 336 L1402.5 331.5 M1400.3 333.7 L1402.5 331.5 L1404.7 333.7 M1394.5 342.5 L1390.5 342.5 M1392.7 340.3 L1390.5 342.5 L1392.7 344.7 M1399.5 342.5 L1405.5 342.5 M1402.5 339.5 L1402.5 345.5" fill="none" stroke="#1f2a30" stroke-width="1"/><path d="M1402.5 336.5 L1402.5 339 M1395 342.5 L1398.5 342.5" stroke="#1f2a30" stroke-width="1" stroke-dasharray="1.2 1"/><circle cx="1428.4" cy="337.4" r="5.8" fill="#f6f6f6" stroke="#c8c8c8" stroke-width="1"/><circle cx="1428.4" cy="360.6" r="4.9" fill="#fff" stroke="#bdbdbd" stroke-width="2.6"/></svg>
<div class="t" style="left:1438.4px;top:329.6px;font-size:11px;line-height:15px;color:#8d8d8d;font-weight:normal;">Gross</div>
<div class="t" style="left:1438.4px;top:353.0px;font-size:11px;line-height:15px;color:#8d8d8d;font-weight:normal;">Net</div>
<svg style="left:1080px;top:205px;" width="112" height="125" viewBox="0 0 112 125">
      <path d="M8 12 L86.7 12 L102.8 28.5 L24.4 28.5 Z" fill="#d0d0d0"/>
      <path d="M32.7 15.9 L70.6 15.9 L77.9 23.9 L40.5 23.9 Z" fill="#f8f8f8"/>
      <path d="M8 98 L86.7 98 L102.8 114.7 L24.4 114.7 Z" fill="#d0d0d0"/>
      <path d="M33.5 31.5 L40.5 38.5 L40.5 109.5 L33.5 102.5 Z" fill="#dcdcdc"/>
      <path d="M40.5 38.5 L77.5 38.5 L77.5 109.5 L40.5 109.5 Z" fill="#fafafa"/>
      <path d="M33.5 31.5 L70.5 31.5 L77.5 38.5 L40.5 38.5 Z" fill="#f7f7f7"/>
      <path d="M70.5 38.5 L70.5 102.5 L33.5 102.5 M70.5 102.5 L77.5 109.5" fill="none" stroke="#666" stroke-width="1" stroke-dasharray="2 1.5"/>
      <path d="M33.5 31.5 L70.5 31.5 L77.5 38.5 L77.5 109.5 L40.5 109.5 L33.5 102.5 Z M33.5 31.5 L40.5 38.5 L77.5 38.5 M40.5 38.5 L40.5 109.5" fill="none" stroke="#1f2a30" stroke-width="1.2" stroke-linejoin="round"/>
      <path d="M78 23.5 L89.5 23.5 M78 38.5 L89.5 38.5 M78 109.5 L99 109.5" stroke="#1f2a30" stroke-width="1" stroke-dasharray="2 1.5"/>
      <path d="M89.5 26 L89.5 108 M98.5 100 L98.5 119" stroke="#1f2a30" stroke-width="1.1"/>
      <path d="M86.5 24.5 L89.5 20.5 L92.5 24.5 Z" fill="#aaa"/>
      <path d="M86 34 L93 34 L89.5 38.5 Z M86 43 L93 43 L89.5 38.5 Z M86 105 L93 105 L89.5 109.5 Z M95 105 L102 105 L98.5 109.5 Z M95 114 L102 114 L98.5 109.5 Z" fill="#1f2a30"/>
    </svg>
<div style="left:1195px;top:219.7px;width:96px;height:21.80000000000001px;background:#fff;border:1px solid #e1e1e1;border-bottom:1px solid #8a8a8a;border-radius:2px"></div>
<div class="t" style="left:1200px;top:223.6px;font-size:11px;line-height:15px;color:#111;font-weight:normal;">-300</div>
<div style="left:1195px;top:264.9px;width:96px;height:20.80000000000001px;background:#f3f3f3;border:1px solid #e1e1e1;border-bottom:1px solid #d8d8d8;border-radius:2px"></div>
<div class="t" style="left:1200px;top:268.29999999999995px;font-size:11px;line-height:15px;color:#9a9a9a;font-weight:normal;">2400</div>
<div style="left:1195px;top:309.4px;width:96px;height:21.80000000000001px;background:#fff;border:1px solid #e1e1e1;border-bottom:1px solid #8a8a8a;border-radius:2px"></div>
<div class="t" style="left:1200px;top:313.29999999999995px;font-size:11px;line-height:15px;color:#111;font-weight:normal;">0</div>
<div class="t" style="left:1079px;top:341.5px;font-size:11px;line-height:15px;color:#111;font-weight:normal;">Home Story:</div>
<div style="left:1079.3px;top:359.2px;width:212.4000000000001px;height:21.80000000000001px;background:#fff;border:1px solid #7a7a7a;border-radius:2px"></div>
<div class="t" style="left:1086.3px;top:362.6px;font-size:11px;line-height:15px;color:#111;font-weight:normal;">3. 2. etasje (Current)</div>
<svg style="left:1275.7px;top:366.1px;" width="12" height="8" viewBox="0 0 12 8"><path d="M1.5 1.5 L6 6 L10.5 1.5" fill="none" stroke="#333" stroke-width="1"/></svg>
<div class="t" style="right:487.20000000000005px;top:391.3px;font-size:11px;line-height:15px;color:#111;font-weight:normal;">to Project Zero</div>
<div style="left:1278px;top:391px;width:12.5px;height:15px;background:#fbfbfb;border:1px solid #d4d4d4;border-radius:3px;"></div>
<svg style="left:1281.25px;top:393.5px;" width="6" height="10" viewBox="0 0 6 10"><path d="M1 1 L5 5 L1 9 Z" fill="#222"/></svg>
<svg style="left:1075px;top:385px;" width="110" height="55" viewBox="0 0 110 55">
      <path d="M8.9 33.2 L88 33.2 L104 49.8 L24.9 49.8 Z" fill="#d0d0d0"/>
      <path d="M33.9 37 L71.6 37 L78.8 44.8 L41.3 44.8 Z" fill="#939799"/>
      <path d="M90.5 24 L90.5 30" stroke="#1f2a30" stroke-width="1.2" stroke-dasharray="2 1.5"/>
      <path d="M90.5 30 L90.5 42" stroke="#1f2a30" stroke-width="1.2"/>
      <path d="M87 40 L94 40 L90.5 45 Z" fill="#1f2a30"/>
      <path d="M80 44.5 L90 44.5" stroke="#1f2a30" stroke-width="1.1" stroke-dasharray="2 1.5"/>
    </svg>
<div style="left:1195px;top:409.7px;width:96px;height:21.80000000000001px;background:#fff;border:1px solid #e1e1e1;border-bottom:1px solid #8a8a8a;border-radius:2px"></div>
<div class="t" style="left:1200px;top:413.6px;font-size:11px;line-height:15px;color:#111;font-weight:normal;">3700</div>
<svg style="left:1315px;top:375px;" width="110" height="60" viewBox="0 0 110 60">
      <path d="M10.9 36.2 L89.7 36.2 L106.1 52.7 L27.3 52.7 Z" fill="#d0d0d0"/>
      <path d="M36.5 6.8 L43.3 6.8 L43.3 47.4 L36.5 40.6 Z" fill="#dcdcdc"/>
      <path d="M43.3 6.8 L80.5 6.8 L80.5 47.4 L43.3 47.4 Z" fill="#fafafa"/>
      <path d="M73.5 6.8 L73.5 40.5 L36.5 40.5 M73.5 40.5 L80.5 47.4" fill="none" stroke="#666" stroke-width="1" stroke-dasharray="2 1.5"/>
      <path d="M36.5 6.8 L36.5 40.6 L43.3 47.4 L80.5 47.4 L80.5 6.8 M43.3 6.8 L43.3 47.4" fill="none" stroke="#1f2a30" stroke-width="1.2" stroke-linejoin="round"/>
      <path d="M81 47.4 L92 47.4" stroke="#1f2a30" stroke-width="1" stroke-dasharray="2 1.5"/>
      <path d="M92.5 38.2 L92.5 56.6" stroke="#1f2a30" stroke-width="1.1"/>
      <path d="M89 43 L96 43 L92.5 47.4 Z M89 52 L96 52 L92.5 47.4 Z" fill="#1f2a30"/>
    </svg>
<div class="t" style="right:183.5999999999999px;top:391.3px;font-size:11px;line-height:15px;color:#111;font-weight:normal;">Subfloor Thickness:</div>
<div style="left:1477.3px;top:409.7px;width:98.10000000000014px;height:21.80000000000001px;background:#fff;border:1px solid #e1e1e1;border-bottom:1px solid #8a8a8a;border-radius:2px"></div>
<div class="t" style="left:1482.3px;top:413.6px;font-size:11px;line-height:15px;color:#111;font-weight:normal;">0</div>
<div style="left:1079px;top:440.1px;width:497px;height:21.5px;background:#d9d9d9;border-radius:3px"></div>
<svg style="left:1084px;top:446.85px;" width="10" height="8" viewBox="0 0 10 8"><path d="M1 2 L9 2 L5 7 Z" fill="#333"/></svg>
<svg style="left:1099px;top:440.85px;" width="22" height="20" viewBox="0 0 22 20"><path d="M2.5 4.5 L2.5 15.5 L5 15.5 M7 15.5 L18.5 15.5 L18.5 9.5 L12.5 9.5 L12.5 3.5 L9.5 3.5 M2.5 4.5 L5 4.5 M5 15.5 L5 18 L7 15.5" fill="none" stroke="#1f2a30" stroke-width="1.25" stroke-linejoin="round"/></svg>
<div class="t" style="left:1125.4px;top:443.35px;font-size:11px;line-height:15px;color:#111;font-weight:bold;transform:scaleX(0.943);transform-origin:left;">FLOOR PLAN</div>
<div style="left:1080.3px;top:468.4px;width:42.700000000000045px;height:42.0px;background:#cce4f7;border:1px solid #9ccaf0;border-radius:3px"></div>
<svg style="left:1084px;top:472px;" width="36" height="36" viewBox="0 0 36 36"><path d="M3.5 6.5 L15.5 6.5 L15.5 13.5 L30.5 13.5 L30.5 26.5 L3.5 26.5 Z" fill="none" stroke="#8a8a8a" stroke-width="1.1"/><path d="M28.5 19 L28.5 15.5 L17.5 15.5 L17.5 8.5 L5.5 8.5 L5.5 24.5 L20 24.5" fill="none" stroke="#1f2a30" stroke-width="1.3"/><path d="M19.6 27 L22.9 30.3 L28.2 21.7" fill="none" stroke="#1f2a30" stroke-width="2"/></svg>
<div style="left:1135.5px;top:468.4px;width:283.70000000000005px;height:42.0px;background:#fff;border:1px solid #d0d0d0;border-radius:3px"></div>
<div class="t" style="left:1139.2px;top:468.0px;font-size:11px;line-height:15px;color:#111;font-weight:normal;">Solid Line</div>
<div style="left:1140px;top:493.5px;width:268px;height:1.1999999999999886px;background:#222"></div>
<svg style="left:1410px;top:484px;" width="7" height="12" viewBox="0 0 7 12"><path d="M1 1 L6 6 L1 11 Z" fill="#222"/></svg>
<div style="left:1486.8px;top:481.6px;width:48.200000000000045px;height:16.599999999999966px;background:#fff;border:1px solid #e1e1e1;border-bottom:1px solid #8a8a8a;border-radius:2px"></div>
<div class="t" style="left:1491.8px;top:482.9px;font-size:11px;line-height:15px;color:#111;font-weight:normal;">241</div>
<div style="left:1544.5px;top:481.6px;width:29.799999999999955px;height:16.599999999999966px;background:#fbfbfb;border:1px solid #d4d4d4;border-radius:3px"></div>
<div style="left:1080.3px;top:523.6px;width:42.700000000000045px;height:41.5px;background:#fbfbfb;border:1px solid #d4d4d4;border-radius:3px"></div>
<svg style="left:1084px;top:527px;" width="36" height="36" viewBox="0 0 36 36"><path d="M3.5 6.5 L15.5 6.5 L15.5 13.5 L30.5 13.5 L30.5 26.5 L3.5 26.5 Z M5.5 8.5 L17.5 8.5 L17.5 15.5 L28.5 15.5 M5.5 8.5 L5.5 24.5 L20 24.5" fill="none" stroke="#8a8a8a" stroke-width="1.1"/><path d="M7.5 10 L7.5 23 M10 10 L10 23 M12.7 10 L12.7 23 M15.3 10 L15.3 23 M17.8 17.2 L17.8 23 M20.2 17.2 L20.2 23 M22.6 17.2 L22.6 23 M25 17.2 L25 21" stroke="#1f2a30" stroke-width="1.2"/><path d="M19.6 26.6 L22.9 30 L28.2 21.5" fill="none" stroke="#1f2a30" stroke-width="2"/></svg>
<div style="left:1135.5px;top:523.6px;width:283.70000000000005px;height:41.5px;background:#f9f9f9;border:1px solid #e2e2e2;border-radius:3px"></div>
<div style="left:1139.2px;top:532.2px;width:24.59999999999991px;height:24.299999999999955px;background:#fafafa;border:1px solid #c8c8c8"></div>
<svg style="left:1140.2px;top:533.2px;" width="23" height="22" viewBox="0 0 23 22"><path d="M2 3.0 L21 3.0" stroke="#dedede" stroke-width="0.8"/><path d="M2 5.5 L21 5.5" stroke="#dedede" stroke-width="0.8"/><path d="M2 8.0 L21 8.0" stroke="#dedede" stroke-width="0.8"/><path d="M2 10.5 L21 10.5" stroke="#dedede" stroke-width="0.8"/><path d="M2 13.0 L21 13.0" stroke="#dedede" stroke-width="0.8"/><path d="M2 15.5 L21 15.5" stroke="#dedede" stroke-width="0.8"/><path d="M2 18.0 L21 18.0" stroke="#dedede" stroke-width="0.8"/><path d="M2 20.5 L21 20.5" stroke="#dedede" stroke-width="0.8"/></svg>
<div class="t" style="left:1168px;top:537.6px;font-size:11px;line-height:15px;color:#9a9a9a;font-weight:normal;">Linjer 120 mm</div>
<svg style="left:1410px;top:539px;" width="7" height="12" viewBox="0 0 7 12"><path d="M1 1 L6 6 L1 11 Z" fill="#bbb"/></svg>
<div style="left:1486.8px;top:523.5px;width:48.200000000000045px;height:17.0px;background:#f3f3f3;border:1px solid #e1e1e1;border-bottom:1px solid #d8d8d8;border-radius:2px"></div>
<div class="t" style="left:1491.8px;top:525.0px;font-size:11px;line-height:15px;color:#9a9a9a;font-weight:normal;">109</div>
<div style="left:1486.8px;top:549.5px;width:48.200000000000045px;height:17.0px;background:#f3f3f3;border:1px solid #e1e1e1;border-bottom:1px solid #d8d8d8;border-radius:2px"></div>
<div class="t" style="left:1491.8px;top:551.0px;font-size:11px;line-height:15px;color:#9a9a9a;font-weight:normal;">99</div>
<div style="left:1544.7px;top:524.2px;width:29.5px;height:14.699999999999932px;background:#f8f8f8;border:1px solid #e6e6e6;border-radius:4px"></div>
<div style="left:1544.7px;top:550.2px;width:29.5px;height:14.699999999999932px;background:#f8f8f8;border:1px solid #e6e6e6;border-radius:4px"></div>
<svg style="left:1440px;top:474px" width="140" height="95" viewBox="1440 474 140 95"><defs><pattern id="ck2" width="2" height="2" patternUnits="userSpaceOnUse"><rect width="1" height="1" fill="#111"/><rect x="1" y="1" width="1" height="1" fill="#111"/></pattern></defs><path d="M1449.5 485.5 L1455.5 485.5 L1455.5 490.5 L1462.5 490.5 L1462.5 497 L1449.5 497 Z M1453 484 L1453 487 M1459 489 L1459 492 M1453 495.5 L1453 498.5" fill="none" stroke="#1f2a30" stroke-width="1.2"/><path d="M1469.3 483.2 L1469.3 492.7 L1472.5 496.3 L1475.8 492.7 L1475.8 483.2 M1469.3 492.7 L1475.8 492.7 M1465.3 496.5 L1472.5 496.5" fill="none" stroke="#1f2a30" stroke-width="1.1" stroke-linejoin="round"/><path d="M1550.5 484.5 L1550.5 495" stroke="#111" stroke-width="1.2"/><rect x="1558.2" y="484" width="14" height="10.9" rx="2.5" fill="#000"/><path d="M1449.7 525.5 L1449.7 537.5 M1452.2 525.5 L1452.2 537.5 M1454.7 525.5 L1454.7 537.5 M1457.2 525.5 L1457.2 537.5 M1459.7 525.5 L1459.7 537.5 M1462.2 525.5 L1462.2 537.5" stroke="#a6a6a6" stroke-width="1"/><path d="M1469.3 525.4 L1469.3 532.9 L1472.5 536.5 L1475.8 532.9 L1475.8 525.4 M1469.3 532.9 L1475.8 532.9 M1465.3 536.7 L1472.5 536.7" fill="none" stroke="#a6a6a6" stroke-width="1.1" stroke-linejoin="round"/><path d="M1550.5 527 L1550.5 536.5" stroke="#111" stroke-width="1.1" stroke-dasharray="1.3 1.3"/><rect x="1558" y="526.3" width="14.2" height="10.9" rx="3" fill="url(#ck2)"/><rect x="1449.2" y="551.2" width="12.8" height="12.4" rx="1" fill="#d0d0d0"/><path d="M1469.3 551.2 L1469.3 558.6999999999999 L1472.5 562.3 L1475.8 558.6999999999999 L1475.8 551.2 M1469.3 558.6999999999999 L1475.8 558.6999999999999 M1465.3 562.5 L1472.5 562.5" fill="none" stroke="#a6a6a6" stroke-width="1.1" stroke-linejoin="round"/><path d="M1550.5 553 L1550.5 562.5" stroke="#111" stroke-width="1.1" stroke-dasharray="1.3 1.3"/><rect x="1558" y="552.3" width="14.2" height="10.9" rx="3" fill="url(#ck2)"/></svg>
<div style="left:1136px;top:579px;width:30.799999999999955px;height:20.799999999999955px;background:#f6f6f6;border-radius:3px"></div>
<svg style="left:1142px;top:582px;" width="18" height="16" viewBox="0 0 18 16"><path d="M2 2.0 L16 2.0" stroke="#888" stroke-width="0.8"/><path d="M2 4.2 L16 4.2" stroke="#888" stroke-width="0.8"/><path d="M2 6.4 L16 6.4" stroke="#888" stroke-width="0.8"/><path d="M2 8.600000000000001 L16 8.600000000000001" stroke="#888" stroke-width="0.8"/><path d="M2 10.8 L16 10.8" stroke="#888" stroke-width="0.8"/><path d="M2 13.0 L16 13.0" stroke="#888" stroke-width="0.8"/></svg>
<svg style="left:1176px;top:580px;" width="20" height="20" viewBox="0 0 20 20"><path d="M2 10 L10 2 M2 15 L15 2 M3 18 L18 3 M8 18 L18 8 M13 18 L18 13" stroke="#c0c0c0" stroke-width="1" stroke-dasharray="2 1"/></svg>
<div style="left:1269.4px;top:584px;width:12.299999999999955px;height:12.299999999999955px;background:#fff;border:1px solid #c4c4c4;border-radius:2px"></div>
<div class="t" style="left:1285.7px;top:582.5px;font-size:11px;line-height:15px;color:#8d8d8d;font-weight:normal;">Use Fill from Surface</div>
<div style="left:1079px;top:607.5px;width:497px;height:21.100000000000023px;background:#d9d9d9;border-radius:3px"></div>
<svg style="left:1085px;top:613.05px;" width="8" height="10" viewBox="0 0 8 10"><path d="M2 1 L7 5 L2 9 Z" fill="#333"/></svg>
<svg style="left:1099px;top:608.05px;" width="22" height="20" viewBox="0 0 22 20"><rect x="1.5" y="3.5" width="18" height="14" rx="0.8" fill="none" stroke="#1f2a30" stroke-width="1.25" stroke-linejoin="round"/><path d="M1.5 8.5 L19.5 8.5 M1.5 12.5 L19.5 12.5 M4 6 L17 6 M4 10.5 L9 10.5 M11 10.5 L17 10.5 M4 15 L17 15" stroke="#1f2a30" stroke-width="1"/></svg>
<div class="t" style="left:1125.4px;top:610.55px;font-size:11px;line-height:15px;color:#111;font-weight:bold;transform:scaleX(0.975);transform-origin:left;">ZONE STAMP</div>
<div style="left:1079px;top:634.2px;width:497px;height:21.5px;background:#d9d9d9;border-radius:3px"></div>
<svg style="left:1085px;top:639.95px;" width="8" height="10" viewBox="0 0 8 10"><path d="M2 1 L7 5 L2 9 Z" fill="#333"/></svg>
<svg style="left:1099px;top:634.95px;" width="22" height="20" viewBox="0 0 22 20"><path d="M2.5 7 L2.5 18 M1 9 L2.5 7 L4 9 M1 16 L2.5 18 L4 16" fill="none" stroke="#1f2a30" stroke-width="1.25" stroke-linejoin="round"/><path d="M5.5 18 L10 6 L14.5 18 M7 14 L13 14" fill="none" stroke="#1f2a30" stroke-width="1.25" stroke-linejoin="round"/><path d="M15.5 2 L15.5 8 L18 12 L20.5 8 L20.5 2 M14 12 L18 12" fill="none" stroke="#1f2a30" stroke-width="1.25" stroke-linejoin="round"/></svg>
<div class="t" style="left:1125.4px;top:637.45px;font-size:11px;line-height:15px;color:#111;font-weight:bold;transform:scaleX(0.919);transform-origin:left;">STAMP TEXT STYLE</div>
<div style="left:1079px;top:661.2px;width:497px;height:21.5px;background:#d9d9d9;border-radius:3px"></div>
<svg style="left:1084px;top:667.95px;" width="10" height="8" viewBox="0 0 10 8"><path d="M1 2 L9 2 L5 7 Z" fill="#333"/></svg>
<svg style="left:1099px;top:661.95px;" width="22" height="20" viewBox="0 0 22 20"><rect x="1.5" y="2.5" width="10" height="9" fill="none" stroke="#1f2a30" stroke-width="1.25" stroke-linejoin="round"/><path d="M3 4 L10 10 M10 4 L3 10" stroke="#1f2a30" stroke-width="1"/><rect x="9.5" y="10.5" width="10" height="8" fill="#d9d9d9" stroke="#1f2a30" stroke-width="1.2"/><path d="M11.5 13 L12.5 13 M14 13 L18 13 M11.5 16 L12.5 16 M14 16 L18 16 M15 2 L15 8 M13.5 3.5 L15 2 L16.5 3.5 M13.5 6.5 L15 8 L16.5 6.5 M1.5 16 L7.5 16 M3 14.5 L1.5 16 L3 17.5 M6 14.5 L7.5 16 L6 17.5" stroke="#1f2a30" stroke-width="1"/></svg>
<div class="t" style="left:1125.4px;top:664.45px;font-size:11px;line-height:15px;color:#111;font-weight:bold;transform:scaleX(0.956);transform-origin:left;">INNSTILLINGER</div>
<div style="left:1079px;top:689px;width:497px;height:23px;background:#f0f0f0"></div>
<div style="left:1080.9px;top:690.4px;width:25.09999999999991px;height:19.600000000000023px;background:#fbfbfb;border:1px solid #d4d4d4;border-radius:3px;"></div>
<svg style="left:1088px;top:694px;" width="10" height="12" viewBox="0 0 10 12"><path d="M8 1 L2 6 L8 11 Z" fill="#222"/></svg>
<div style="left:1109px;top:690.4px;width:26.200000000000045px;height:19.600000000000023px;background:#fbfbfb;border:1px solid #d4d4d4;border-radius:3px;"></div>
<svg style="left:1117px;top:694px;" width="10" height="12" viewBox="0 0 10 12"><path d="M2 1 L8 6 L2 11 Z" fill="#222"/></svg>
<div style="left:1138.6px;top:690.4px;width:25.800000000000182px;height:19.600000000000023px;background:#fbfbfb;border:1px solid #d4d4d4;border-radius:3px;"></div>
<svg style="left:1140px;top:688px" width="50" height="24" viewBox="1140 688 50 24"><path d="M1147 695.5 L1143.5 695.5 L1143.5 707.5 L1153 707.5 L1153 703.5 M1145.5 699.5 L1150.5 699.5 M1145.5 702 L1150.5 702 M1145.5 704.5 L1150.5 704.5" fill="none" stroke="#1f2a30" stroke-width="1.2"/><path d="M1151 701.5 Q1155 700 1155.3 694" fill="none" stroke="#1f6fe0" stroke-width="1.8"/><path d="M1152.5 695.5 L1155.5 692 L1158 696" fill="#1f6fe0" stroke="#1f6fe0" stroke-width="1"/></svg>
<div style="left:1167.5px;top:690.4px;width:406.79999999999995px;height:19.600000000000023px;background:#fbfbfb;border:1px solid #d4d4d4;border-radius:3px;"></div>
<svg style="left:1170px;top:688px" width="20" height="24" viewBox="1170 688 20 24"><path d="M1176.3 690.8 L1176.3 703.7 L1179.4 708.3 L1182.5 703.7 L1182.5 690.8 M1176.3 703.7 L1182.5 703.7" fill="none" stroke="#1f2a30" stroke-width="1.2" stroke-linejoin="round"/></svg>
<div class="t" style="left:1192.6px;top:692.7px;font-size:11px;line-height:15px;color:#111;font-weight:bold;transform:scaleX(0.979);transform-origin:left;">2D-representasjon 1:100...</div>
<svg style="left:1566px;top:695px;" width="6" height="10" viewBox="0 0 6 10"><path d="M1 1 L5 5 L1 9 Z" fill="#222"/></svg>
<div style="left:1079px;top:718px;width:481px;height:265px;background:#fff"></div>
<svg style="left:1562px;top:720px;" width="12" height="12" viewBox="0 0 12 12"><path d="M1.5 9 L6 3.5 L10.5 9 Z" fill="#c5c5c5"/></svg>
<svg style="left:1562px;top:968px;" width="12" height="12" viewBox="0 0 12 12"><path d="M1.5 3 L6 8.5 L10.5 3 Z" fill="#c5c5c5"/></svg>
<div style="left:1079px;top:737.6px;width:481px;height:1.0px;background:#efefef"></div>
<div style="left:1079px;top:757.3px;width:481px;height:1.0px;background:#efefef"></div>
<div style="left:1079px;top:777.4px;width:481px;height:1.0px;background:#efefef"></div>
<div style="left:1079px;top:797.4px;width:481px;height:1.0px;background:#efefef"></div>
<div style="left:1079px;top:817.3px;width:481px;height:1.0px;background:#efefef"></div>
<div style="left:1106.3px;top:721.5px;width:12.5px;height:12.5px;background:#fff;border:1px solid #cfcfcf"></div>
<div class="t" style="left:1141.3px;top:720.6px;font-size:11px;line-height:15px;color:#a6a6a6;font-weight:normal;">Rammepenn</div>
<div class="t" style="left:1300.2px;top:720.6px;font-size:11px;line-height:15px;color:#a6a6a6;font-weight:normal;">0.09 mm</div>
<div class="t" style="left:1439.3px;top:720.6px;font-size:11px;line-height:15px;color:#a6a6a6;font-weight:normal;">1</div>
<div style="left:1491px;top:720.5px;width:46px;height:14.5px;background:#fff;border:1px solid #333"></div>
<div style="left:1497px;top:723px;width:1px;height:9px;background:#333"></div>
<div style="left:1505px;top:723.5px;width:30px;height:8.5px;background:#808080"></div>
<div style="left:1106.3px;top:741.5px;width:12.5px;height:12.5px;background:#fff;border:1px solid #cfcfcf"></div>
<div class="t" style="left:1141.3px;top:740.3px;font-size:11px;line-height:15px;color:#a6a6a6;font-weight:normal;">Linjetype ramme</div>
<div class="t" style="left:1300.2px;top:740.3px;font-size:11px;line-height:15px;color:#a6a6a6;font-weight:normal;">Solid Line</div>
<div style="left:1441px;top:747.5px;width:96px;height:1.2000000000000455px;background:#333"></div>
<div style="left:1079px;top:758px;width:481px;height:20px;background:#f0f0f0"></div>
<svg style="left:1084px;top:763px;" width="10" height="8" viewBox="0 0 10 8"><path d="M1 2 L9 2 L5 7 Z" fill="#333"/></svg>
<div class="t" style="left:1139px;top:760.4px;font-size:11px;line-height:15px;color:#111;font-weight:bold;transform:scaleX(0.943);transform-origin:left;">BAKGRUNNSSKRAVUR</div>
<div style="left:1439.3px;top:761.5px;width:12.5px;height:12.5px;background:#fff;border:1px solid #444;border-radius:1px"></div>
<svg style="left:1439.3px;top:761.5px;" width="13" height="13" viewBox="0 0 13 13"><path d="M2.5 6.5 L5 10 L10.5 2.5" fill="none" stroke="#111" stroke-width="1.4"/></svg>
<div class="t" style="left:1141.3px;top:780.4px;font-size:11px;line-height:15px;color:#111;font-weight:normal;">Skravurtype</div>
<div class="t" style="left:1300.2px;top:780.4px;font-size:11px;line-height:15px;color:#111;font-weight:normal;">Background</div>
<div style="left:1491px;top:780.5px;width:46px;height:14.5px;background:#fff;border:1px solid #333"></div>
<div class="t" style="left:1141.3px;top:800.3px;font-size:11px;line-height:15px;color:#111;font-weight:normal;">Skravurpenn</div>
<div class="t" style="left:1300.2px;top:800.3px;font-size:11px;line-height:15px;color:#111;font-weight:normal;">0.18 mm</div>
<div class="t" style="left:1439.3px;top:800.3px;font-size:11px;line-height:15px;color:#111;font-weight:normal;">104</div>
<div style="left:1491px;top:800.5px;width:46px;height:14.5px;background:#fff;border:1px solid #333"></div>
<div style="left:1079px;top:818.2px;width:481px;height:18.09999999999991px;background:#0078d7"></div>
<div style="left:1106.3px;top:821px;width:12.5px;height:12.5px;background:#8a8a8a"></div>
<div class="t" style="left:1141.3px;top:820.4px;font-size:11px;line-height:15px;color:#fff;font-weight:normal;">Skravurpenn bakgrunn</div>
<div class="t" style="left:1300.2px;top:820.4px;font-size:11px;line-height:15px;color:#fff;font-weight:normal;">0.18 mm</div>
<div style="left:1439.3px;top:818.5px;width:49.40000000000009px;height:17.5px;background:#fff"></div>
<div class="t" style="left:1441.5px;top:820.4px;font-size:11px;line-height:15px;color:#111;font-weight:normal;">104</div>
<div style="left:1491px;top:820px;width:46px;height:15px;background:#fff;border:1px solid #222"></div>
<div style="left:1541px;top:819.5px;width:14.599999999999909px;height:16.0px;background:#fbfbfb;border:1px solid #cfcfcf;border-radius:2px"></div>
<svg style="left:1545px;top:822px;" width="7" height="10" viewBox="0 0 7 10"><path d="M1 1 L5 5 L1 9 Z" fill="#222"/></svg>
<svg style="left:1100px;top:718px" width="40" height="122" viewBox="1100 718 40 122"><path d="M1122.5 733.5 L1132.5 722" stroke="#c4c4c4" stroke-width="1"/><path d="M1126.6 741.5 L1126.6 750.1 L1129.6 753.5 L1132.6 750.1 L1132.6 741.5 M1126.6 750.1 L1132.6 750.1 M1122.1 754.0 L1129.6 754.0" fill="none" stroke="#c4c4c4" stroke-width="1.1" stroke-linejoin="round"/><rect x="1106.7" y="782.1" width="11.6" height="12" fill="#fff" stroke="#1f2a30" stroke-width="1.3"/><path d="M1107 787 L1112 782 M1107 791.5 L1116.5 782 M1109 794 L1118 785 M1113.5 794 L1118 789.5" stroke="#1f2a30" stroke-width="1.1"/><circle cx="1125.5" cy="787" r="3.2" fill="none" stroke="#1f2a30" stroke-width="1.1"/><path d="M1122.5 794 L1128.5 786 L1133 794 Z M1124 790 L1127 787" fill="none" stroke="#1f2a30" stroke-width="1.1" stroke-linejoin="round"/><path d="M1106.5 806 L1111 801.5 M1106.5 810.5 L1115.5 801.5 M1108.5 813 L1118 803.5 M1113 813 L1118 808" stroke="#1f2a30" stroke-width="1.2"/><path d="M1126.6 801 L1126.6 809.6 L1129.6 813 L1132.6 809.6 L1132.6 801 M1126.6 809.6 L1132.6 809.6 M1122.1 813.5 L1129.6 813.5" fill="none" stroke="#1f2a30" stroke-width="1.1" stroke-linejoin="round"/><path d="M1126.6 821 L1126.6 829.6 L1129.6 833 L1132.6 829.6 L1132.6 821 M1126.6 829.6 L1132.6 829.6 M1122.1 833.5 L1129.6 833.5" fill="none" stroke="#111" stroke-width="1.1" stroke-linejoin="round"/></svg>
<div style="left:1079px;top:989.4px;width:497px;height:21.200000000000045px;background:#d9d9d9;border-radius:3px"></div>
<svg style="left:1085px;top:995.0px;" width="8" height="10" viewBox="0 0 8 10"><path d="M2 1 L7 5 L2 9 Z" fill="#333"/></svg>
<svg style="left:1099px;top:990.0px;" width="22" height="20" viewBox="0 0 22 20"><path d="M1.5 6.5 L6.5 2.5 L13.5 2.5 L13.5 5.5 M1.5 6.5 L7.5 6.5 L13.5 2.5 M1.5 6.5 L1.5 17.5 L7.5 17.5 L7.5 6.5" fill="none" stroke="#1f2a30" stroke-width="1.25" stroke-linejoin="round"/><path d="M8.5 9 L11.5 6 L18.5 6 L18.5 15 L15.5 17.5 L8.5 17.5 Z M8.5 9 L15.5 9 L18.5 6 M15.5 9 L15.5 17.5" fill="#d9d9d9" stroke="#1f2a30" stroke-width="1.25" stroke-linejoin="round"/></svg>
<div class="t" style="left:1125.4px;top:992.5px;font-size:11px;line-height:15px;color:#111;font-weight:bold;">MODEL</div>
<div style="left:1079px;top:1016.6px;width:497px;height:20.899999999999977px;background:#d9d9d9;border-radius:3px"></div>
<svg style="left:1085px;top:1022.05px;" width="8" height="10" viewBox="0 0 8 10"><path d="M2 1 L7 5 L2 9 Z" fill="#333"/></svg>
<svg style="left:1099px;top:1017.05px;" width="22" height="20" viewBox="0 0 22 20"><rect x="1.5" y="1.5" width="11" height="14" rx="0.8" fill="none" stroke="#1f2a30" stroke-width="1.25" stroke-linejoin="round"/><rect x="3.5" y="3.5" width="7" height="3" fill="none" stroke="#1f2a30" stroke-width="1.25" stroke-linejoin="round"/><path d="M3.5 9 L5 9 M6.3 9 L7.8 9 M9 9 L10.5 9 M3.5 11.3 L5 11.3 M6.3 11.3 L7.8 11.3 M9 11.3 L10.5 11.3 M3.5 13.5 L10.5 13.5 M13.5 2 L14.5 2 L14.5 5.5 L17.5 5.5 L17.5 17.5 L9 17.5 M14.5 9 L16 9 M14.5 12 L16 12 M4 17.5 L6 17.5" stroke="#1f2a30" stroke-width="1.1" fill="none"/></svg>
<div class="t" style="left:1125.4px;top:1019.55px;font-size:11px;line-height:15px;color:#111;font-weight:bold;transform:scaleX(0.943);transform-origin:left;">AREA CALCULATION</div>
<div style="left:1079px;top:1043.5px;width:497px;height:20.90000000000009px;background:#d9d9d9;border-radius:3px"></div>
<svg style="left:1085px;top:1048.95px;" width="8" height="10" viewBox="0 0 8 10"><path d="M2 1 L7 5 L2 9 Z" fill="#333"/></svg>
<svg style="left:1099px;top:1043.95px;" width="22" height="20" viewBox="0 0 22 20"><rect x="4.5" y="2.5" width="11" height="14.5" rx="0.8" fill="none" stroke="#1f2a30" stroke-width="1.25" stroke-linejoin="round"/><path d="M6.5 5.5 L10.5 5.5 M6.5 8 L13.5 8 M6.5 10.5 L11.5 10.5 M6.5 13 L13.5 13" stroke="#1f2a30" stroke-width="1.1"/></svg>
<div class="t" style="left:1125.4px;top:1046.45px;font-size:11px;line-height:15px;color:#111;font-weight:bold;transform:scaleX(0.933);transform-origin:left;">CLASSIFICATION AND PROPERTIES</div>
<div style="left:1079px;top:1070.7px;width:497px;height:20.899999999999864px;background:#d9d9d9;border-radius:3px"></div>
<svg style="left:1085px;top:1076.15px;" width="8" height="10" viewBox="0 0 8 10"><path d="M2 1 L7 5 L2 9 Z" fill="#333"/></svg>
<svg style="left:1099px;top:1071.15px;" width="22" height="20" viewBox="0 0 22 20"><path d="M2 17.5 L2 6 L5.5 2.5 L16.5 2.5 L16.5 6 L13 8.5 L2 8.5 M5.5 2.5 L5.5 6 L16.5 6 M4.5 8.5 L4.5 12" fill="none" stroke="#1f2a30" stroke-width="1.25" stroke-linejoin="round"/><rect x="9" y="9.5" width="8" height="9" rx="0.8" fill="#d9d9d9" stroke="#1f2a30" stroke-width="1.2"/><path d="M11 12.5 L15 12.5 M11 15 L15 15" stroke="#1f2a30" stroke-width="1"/></svg>
<div class="t" style="left:1125.4px;top:1073.65px;font-size:11px;line-height:15px;color:#111;font-weight:bold;transform:scaleX(0.942);transform-origin:left;">STRUCTURAL ANALYTICAL PARAMETERS</div>
<div style="left:1079px;top:1104px;width:497px;height:1px;background:#a8a8a8"></div>
<svg style="left:1079px;top:1116px;" width="30" height="24" viewBox="0 0 30 24"><path d="M7 3 L27 3 L23 12 L3 12 Z" fill="#fff" stroke="#222" stroke-width="1.1"/><path d="M3 12 L3 15 L23 15 L27 6 M3 15 L3 18 L23 18 L27 9 M3 18 L3 21 L23 21 L27 12" fill="none" stroke="#222" stroke-width="1.1"/><rect x="10" y="5.5" width="5" height="4" fill="none" stroke="#222" stroke-width="1"/><path d="M17 9.5 L19 5.5 M20 9.5 L22 5.5" stroke="#222" stroke-width="1"/></svg>
<div style="left:1115.7px;top:1117.6px;width:253.29999999999995px;height:19.700000000000045px;background:#fbfbfb;border:1px solid #cfcfcf;border-radius:3px"></div>
<svg style="left:1120px;top:1120px;" width="20" height="14" viewBox="0 0 20 14"><path d="M2 7 Q10 -1 18 7 Q10 15 2 7 Z" fill="none" stroke="#222" stroke-width="1.2"/><circle cx="10" cy="7" r="2.8" fill="#222"/></svg>
<div class="t" style="left:1141px;top:1119.8px;font-size:11px;line-height:15px;color:#111;font-weight:normal;">862- M___Nettoareal</div>
<svg style="left:1359px;top:1122px;" width="6" height="10" viewBox="0 0 6 10"><path d="M1 1 L5 5 L1 9 Z" fill="#222"/></svg>
<div style="left:1387px;top:1117.6px;width:87.29999999999995px;height:19.700000000000045px;background:#fbfbfb;border:1px solid #cfcfcf;border-radius:3px"></div>
<div class="t" style="left:1230.6px;width:400px;text-align:center;top:1119.8px;font-size:11px;line-height:15px;color:#111;font-weight:normal;">Cancel</div>
<div style="left:1487.2px;top:1117.6px;width:87.20000000000005px;height:19.700000000000045px;background:#fbfbfb;border:1px solid #0067c0;border-radius:3px"></div>
<div class="t" style="left:1330.8px;width:400px;text-align:center;top:1119.8px;font-size:11px;line-height:15px;color:#111;font-weight:normal;">OK</div>
<svg style="left:1580px;top:1138px;" width="9" height="9" viewBox="0 0 9 9"><circle cx="7" cy="3" r="0.7" fill="#999"/><circle cx="5" cy="5" r="0.7" fill="#999"/><circle cx="7" cy="5" r="0.7" fill="#999"/><circle cx="3" cy="7" r="0.7" fill="#999"/><circle cx="5" cy="7" r="0.7" fill="#999"/><circle cx="7" cy="7" r="0.7" fill="#999"/></svg>
<svg style="left:0px;top:0px;pointer-events:none" width="1759" height="1252" viewBox="0 0 1759 1252"><defs><filter id="sh" x="-5%" y="-5%" width="110%" height="110%"><feDropShadow dx="1" dy="2" stdDeviation="1.6" flood-color="#000" flood-opacity="0.35"/></filter></defs><g filter="url(#sh)"><rect x="1068.3" y="688.2" width="511.9" height="28.4" fill="none" stroke="#fb3e44" stroke-width="2.8"/><rect x="1059.3" y="796.6" width="531.6" height="49" fill="none" stroke="#fb3e44" stroke-width="2.8"/><line x1="1394.8" y1="727.5" x2="1395.8" y2="779" stroke="#fb3e44" stroke-width="3" stroke-linecap="round"/><path d="M1390 776 L1401.5 776 L1396 790.5 Z" fill="#fb3e44"/><line x1="1343" y1="699.6" x2="775" y2="1232" stroke="#fb3e44" stroke-width="3.2" stroke-linecap="round"/><path d="M767 1239.6 L771.4 1227.5 L779.8 1236.6 Z" fill="#fb3e44" stroke="#fb3e44" stroke-width="2" stroke-linejoin="round"/></g></svg>
</body></html>
